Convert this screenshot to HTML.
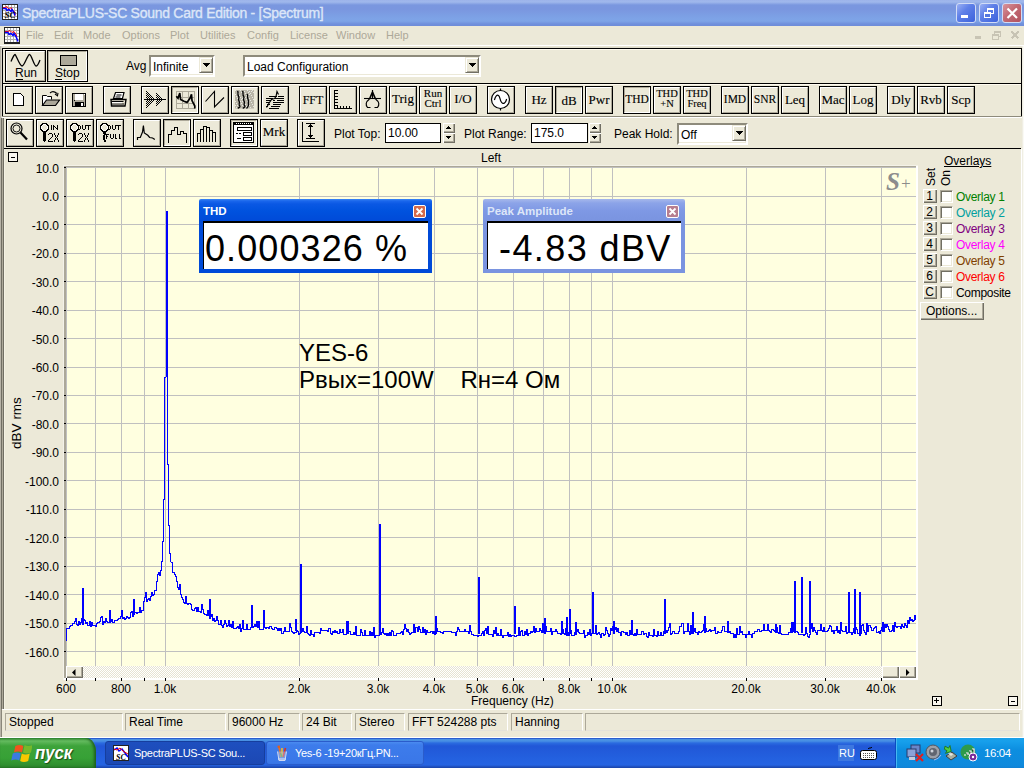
<!DOCTYPE html><html><head><meta charset="utf-8"><style>
body{margin:0;width:1024px;height:768px;position:relative;overflow:hidden;background:#ECE9D8;font-family:"Liberation Sans",sans-serif;font-size:11px;color:#000}
.ser{font-family:"Liberation Serif",serif}
svg{position:absolute;left:0;top:0}
</style></head><body>
<div style="position:absolute;left:0px;top:0px;width:1024px;height:26px;background:linear-gradient(#9DB3EA 0px,#A0B8EC 2px,#7A97DF 5px,#7A96DF 9px,#7DA2E6 18px,#7EA4E7 21px,#7090DC 24px,#6E8CD8 26px)"></div>
<div style="position:absolute;left:22px;top:5px;white-space:nowrap;font-size:14px;color:#DCE6F8;letter-spacing:-0.28px;-webkit-text-stroke:0.35px #DCE6F8">SpectraPLUS-SC Sound Card Edition - [Spectrum]</div>
<svg style="left:2px;top:4px" width="16" height="16" shape-rendering="crispEdges"><rect x="0" y="0" width="16" height="16" fill="#222"/><rect x="1" y="1" width="14" height="14" fill="#fff"/><rect x="3" y="1" width="1" height="14" fill="#B0B0B0"/><rect x="6" y="1" width="1" height="14" fill="#B0B0B0"/><rect x="9" y="1" width="1" height="14" fill="#B0B0B0"/><rect x="12" y="1" width="1" height="14" fill="#B0B0B0"/><rect x="1" y="3" width="14" height="1" fill="#B0B0B0"/><rect x="1" y="6" width="14" height="1" fill="#B0B0B0"/><rect x="1" y="9" width="14" height="1" fill="#B0B0B0"/><rect x="1" y="12" width="14" height="1" fill="#B0B0B0"/><path d="M1 3.5h2l2-1 2 3 2-2 2 3 2 2v3" stroke="#f00" fill="none" shape-rendering="auto"/><path d="M1 4.5h3l1 2 2-1 2 2 1-2 2 3 1 3" stroke="#00f" stroke-width="1.6" fill="none" shape-rendering="auto"/><text x="2.5" y="14" font-family="Liberation Serif" font-style="italic" font-weight="bold" font-size="9" fill="#000" shape-rendering="auto">SC</text></svg>
<div style="position:absolute;left:956px;top:3px;width:18px;height:18px;border:1px solid #D2DCF6;border-radius:3px;background:linear-gradient(135deg,#9AB0F4 0%,#5F80E8 40%,#3C62DC 100%)"></div>
<div style="position:absolute;left:961px;top:15px;width:7px;height:3px;background:#fff"></div>
<div style="position:absolute;left:979px;top:3px;width:18px;height:18px;border:1px solid #D2DCF6;border-radius:3px;background:linear-gradient(135deg,#9AB0F4 0%,#5F80E8 40%,#3C62DC 100%)"></div>
<svg style="left:979px;top:3px" width="20" height="20" shape-rendering="crispEdges"><path d="M8.5 5.5h6v5h-6z" stroke="#fff" fill="none"/><rect x="8" y="5" width="7" height="2" fill="#fff"/><rect x="5.5" y="9.5" width="6" height="5" fill="#5578E0" stroke="#fff"/><rect x="5" y="9" width="7" height="2" fill="#fff"/></svg>
<div style="position:absolute;left:1002px;top:3px;width:18px;height:18px;border:1px solid #D2DCF6;border-radius:3px;background:linear-gradient(135deg,#D9949C 0%,#C26A74 45%,#B2525E 100%)"></div>
<svg style="left:1002px;top:3px" width="20" height="20"><path d="M5.5 5.5L15 15M15 5.5L5.5 15" stroke="#fff" stroke-width="2.2"/></svg>
<div style="position:absolute;left:0px;top:26px;width:1024px;height:19px;background:#ECE9D8"></div>
<div style="position:absolute;left:0px;top:45px;width:1024px;height:1px;background:#fff"></div>
<svg style="left:4px;top:27px" width="16" height="17" shape-rendering="crispEdges"><rect x="0" y="0" width="16" height="17" fill="#222"/><rect x="1" y="1" width="14" height="14" fill="#fff"/><rect x="3" y="1" width="1" height="14" fill="#B0B0B0"/><rect x="6" y="1" width="1" height="14" fill="#B0B0B0"/><rect x="9" y="1" width="1" height="14" fill="#B0B0B0"/><rect x="12" y="1" width="1" height="14" fill="#B0B0B0"/><rect x="1" y="3" width="14" height="1" fill="#B0B0B0"/><rect x="1" y="6" width="14" height="1" fill="#B0B0B0"/><rect x="1" y="9" width="14" height="1" fill="#B0B0B0"/><rect x="1" y="12" width="14" height="1" fill="#B0B0B0"/><path d="M1 4.5h3l2-1 2 2 2-1 2 3 1 2" stroke="#f00" fill="none" shape-rendering="auto"/><path d="M1 5.5h3l1 2 2-1 2 2 1-2 2 3 2 5" stroke="#00f" stroke-width="1.6" fill="none" shape-rendering="auto"/></svg>
<div style="position:absolute;left:26px;top:29px;white-space:nowrap;font-size:11px;color:#ACA899">File</div>
<div style="position:absolute;left:54px;top:29px;white-space:nowrap;font-size:11px;color:#ACA899">Edit</div>
<div style="position:absolute;left:83px;top:29px;white-space:nowrap;font-size:11px;color:#ACA899">Mode</div>
<div style="position:absolute;left:122px;top:29px;white-space:nowrap;font-size:11px;color:#ACA899">Options</div>
<div style="position:absolute;left:170px;top:29px;white-space:nowrap;font-size:11px;color:#ACA899">Plot</div>
<div style="position:absolute;left:200px;top:29px;white-space:nowrap;font-size:11px;color:#ACA899">Utilities</div>
<div style="position:absolute;left:247px;top:29px;white-space:nowrap;font-size:11px;color:#ACA899">Config</div>
<div style="position:absolute;left:290px;top:29px;white-space:nowrap;font-size:11px;color:#ACA899">License</div>
<div style="position:absolute;left:336px;top:29px;white-space:nowrap;font-size:11px;color:#ACA899">Window</div>
<div style="position:absolute;left:386px;top:29px;white-space:nowrap;font-size:11px;color:#ACA899">Help</div>
<svg style="left:970px;top:27px" width="54" height="17" shape-rendering="crispEdges"><g stroke="#C8C4B4" fill="none"><rect x="5" y="9" width="6" height="3" fill="#C8C4B4" stroke="none"/><rect x="22.5" y="7.5" width="6" height="5"/><path d="M22.5 8.5h6"/><path d="M24.5 7.5v-3h6v5h-2M24.5 5.5h6"/></g><path d="M41.5 4.5l7 7M48.5 4.5l-7 7" stroke="#C8C4B4" stroke-width="1.8"/></svg>
<div style="position:absolute;left:0px;top:46px;width:1024px;height:2px;background:linear-gradient(#ECE9D8,#D8D5C4)"></div>
<div style="position:absolute;left:2px;top:48px;width:1020px;height:1px;background:#000"></div>
<div style="position:absolute;left:2px;top:48px;width:1px;height:69px;background:#000"></div>
<div style="position:absolute;left:1021px;top:48px;width:1px;height:69px;background:#000"></div>
<div style="position:absolute;left:3px;top:49px;width:1018px;height:1px;background:#FFFBF0"></div>
<div style="position:absolute;left:2px;top:83px;width:1020px;height:1px;background:#000"></div>
<div style="position:absolute;left:3px;top:84px;width:1018px;height:1px;background:#FFFBF0"></div>
<div style="position:absolute;left:5px;top:50px;width:39px;height:30px;border:1px solid #000;background:#ECE9D8"><div style="position:absolute;left:0;top:0;width:37px;height:28px;border-top:1px solid #fff;border-left:1px solid #fff;border-bottom:1px solid #ACA899;border-right:1px solid #ACA899;"></div><svg width="39" height="30"><path d="M5 10.5 C6.5 7 8 3.5 9 3.5 S13.5 15 16 15 S21.5 3.5 23.5 3.5 S28 15 30 15 S33 11 34 9" stroke="#000" stroke-width="1.3" fill="none"/></svg><div style="position:absolute;left:9px;top:15px;font-size:12px">Run</div><div style="position:absolute;left:10px;top:28px;width:7px;height:1px;background:#000"></div></div>
<div style="position:absolute;left:47px;top:50px;width:39px;height:30px;border:1px solid #000;background:#ECE9D8"><div style="position:absolute;left:0;top:0;width:37px;height:28px;border-top:1px solid #ACA899;border-left:1px solid #ACA899;border-bottom:1px solid #fff;border-right:1px solid #fff;"></div><div style="position:absolute;left:12px;top:4px;width:15px;height:9px;border:1px solid #000;background:#ACA899"></div><div style="position:absolute;left:7px;top:15px;font-size:12px">Stop</div><div style="position:absolute;left:7px;top:28px;width:7px;height:1px;background:#000"></div></div>
<div style="position:absolute;left:126px;top:59px;white-space:nowrap;font-size:12px;color:#000">Avg</div>
<div style="position:absolute;left:149px;top:55px;width:62px;height:18px;background:#fff;border-top:2px solid #8E8B7C;border-left:2px solid #8E8B7C;border-bottom:2px solid #fff;border-right:2px solid #fff;box-shadow:inset -1px -1px 0 #ECE9D8"><div style="position:absolute;left:2px;top:3px;font-size:12px">Infinite</div><div style="position:absolute;right:0px;top:0px;width:12px;height:14px;background:#ECE9D8;border-top:1px solid #ECE9D8;border-left:1px solid #ECE9D8;border-bottom:1px solid #716F64;border-right:1px solid #716F64;box-shadow:inset 1px 1px 0 #fff,inset -1px -1px 0 #ACA899"><svg style="left:3px;top:5px" width="7" height="4" shape-rendering="crispEdges"><path d="M0 0h7v1h-1v1h-1v1h-1v1h-1v-1h-1v-1h-1v-1h-1z" fill="#000"/></svg></div></div>
<div style="position:absolute;left:243px;top:55px;width:234px;height:18px;background:#fff;border-top:2px solid #8E8B7C;border-left:2px solid #8E8B7C;border-bottom:2px solid #fff;border-right:2px solid #fff;box-shadow:inset -1px -1px 0 #ECE9D8"><div style="position:absolute;left:2px;top:3px;font-size:12px">Load Configuration</div><div style="position:absolute;right:0px;top:0px;width:12px;height:14px;background:#ECE9D8;border-top:1px solid #ECE9D8;border-left:1px solid #ECE9D8;border-bottom:1px solid #716F64;border-right:1px solid #716F64;box-shadow:inset 1px 1px 0 #fff,inset -1px -1px 0 #ACA899"><svg style="left:3px;top:5px" width="7" height="4" shape-rendering="crispEdges"><path d="M0 0h7v1h-1v1h-1v1h-1v1h-1v-1h-1v-1h-1v-1h-1z" fill="#000"/></svg></div></div>
<div style="position:absolute;left:2px;top:85px;width:1px;height:31px;background:#000"></div>
<div style="position:absolute;left:1021px;top:85px;width:1px;height:31px;background:#000"></div>
<div style="position:absolute;left:2px;top:116px;width:1020px;height:1px;background:#8E8B7C"></div>
<div style="position:absolute;left:2px;top:117px;width:1020px;height:1px;background:#fff"></div>
<div style="position:absolute;left:5px;top:86px;width:26px;height:26px;border:1px solid #000;background:#ECE9D8"><div style="position:absolute;left:0;top:0;width:24px;height:24px;border-top:1px solid #fff;border-left:1px solid #fff;border-bottom:1px solid #ACA899;border-right:1px solid #ACA899;"></div><svg width="26" height="26" shape-rendering="crispEdges"><path d="M7.5 6.5h7l3 3v9h-10z" fill="#fff" stroke="#000"/><rect x="15" y="7" width="1" height="1" fill="#000"/><rect x="16" y="8" width="1" height="1" fill="#000"/></svg></div>
<div style="position:absolute;left:35px;top:86px;width:26px;height:26px;border:1px solid #000;background:#ECE9D8"><div style="position:absolute;left:0;top:0;width:24px;height:24px;border-top:1px solid #fff;border-left:1px solid #fff;border-bottom:1px solid #ACA899;border-right:1px solid #ACA899;"></div><svg width="26" height="26"><path d="M6.5 18.5v-10h4l1 1h4v3" fill="#fff" stroke="#000" stroke-linejoin="round"/><path d="M6.5 18.5l4-5.5h13l-4 5.5z" fill="#ACA899" stroke="#000" stroke-width="1.2"/><path d="M14 6q3-3 7 0.5" fill="none" stroke="#000" stroke-width="1.1"/><path d="M19 7l2.5 1.8 0.5-3" fill="none" stroke="#000" stroke-width="1.1"/></svg></div>
<div style="position:absolute;left:65px;top:86px;width:26px;height:26px;border:1px solid #000;background:#ECE9D8"><div style="position:absolute;left:0;top:0;width:24px;height:24px;border-top:1px solid #fff;border-left:1px solid #fff;border-bottom:1px solid #ACA899;border-right:1px solid #ACA899;"></div><svg width="26" height="26" shape-rendering="crispEdges"><rect x="6" y="6" width="14" height="13" fill="#ACA899"/><path d="M6.5 6.5h13v12.5h-13z" fill="none" stroke="#000"/><rect x="9" y="7" width="8" height="6" fill="#fff"/><rect x="8" y="13" width="1" height="1" fill="#000"/><rect x="9" y="15" width="9" height="4" fill="#000"/><rect x="15" y="16" width="2" height="3" fill="#fff"/><rect x="18" y="7" width="1" height="1" fill="#fff"/></svg></div>
<div style="position:absolute;left:103px;top:86px;width:26px;height:26px;border:1px solid #000;background:#ECE9D8"><div style="position:absolute;left:0;top:0;width:24px;height:24px;border-top:1px solid #fff;border-left:1px solid #fff;border-bottom:1px solid #ACA899;border-right:1px solid #ACA899;"></div><svg width="26" height="26"><path d="M11.5 5.5h8.5l-1.5 6h-9z" fill="#fff" stroke="#000" stroke-width="1.2"/><path d="M12.5 8h5M11.5 10h5" stroke="#000"/><path d="M7 12.5h15l-1 6.5h-13.5z" fill="#ECE9D8" stroke="#000" stroke-width="1.4"/><path d="M7.5 14.5h12M8 17h12" stroke="#000" stroke-width="1.2"/><path d="M8 15.7h10" stroke="#fff"/></svg></div>
<div style="position:absolute;left:141px;top:86px;width:26px;height:26px;border:1px solid #000;background:#ECE9D8"><div style="position:absolute;left:0;top:0;width:24px;height:24px;border-top:1px solid #fff;border-left:1px solid #fff;border-bottom:1px solid #ACA899;border-right:1px solid #ACA899;"></div><svg width="26" height="26" shape-rendering="crispEdges"><g fill="#000"><rect x="4" y="4" width="1" height="1"/><rect x="4" y="6" width="1" height="1"/><rect x="4" y="8" width="1" height="1"/><rect x="4" y="10" width="1" height="1"/><rect x="4" y="12" width="1" height="1"/><rect x="4" y="14" width="1" height="1"/><rect x="4" y="16" width="1" height="1"/><rect x="4" y="18" width="1" height="1"/><rect x="4" y="20" width="1" height="1"/><rect x="5" y="5" width="1" height="1"/><rect x="5" y="7" width="1" height="1"/><rect x="5" y="9" width="1" height="1"/><rect x="5" y="11" width="1" height="1"/><rect x="5" y="13" width="1" height="1"/><rect x="5" y="15" width="1" height="1"/><rect x="5" y="17" width="1" height="1"/><rect x="5" y="19" width="1" height="1"/><rect x="6" y="6" width="1" height="1"/><rect x="6" y="8" width="1" height="1"/><rect x="6" y="10" width="1" height="1"/><rect x="6" y="12" width="1" height="1"/><rect x="6" y="14" width="1" height="1"/><rect x="6" y="16" width="1" height="1"/><rect x="6" y="18" width="1" height="1"/><rect x="7" y="7" width="1" height="1"/><rect x="7" y="9" width="1" height="1"/><rect x="7" y="11" width="1" height="1"/><rect x="7" y="13" width="1" height="1"/><rect x="7" y="15" width="1" height="1"/><rect x="7" y="17" width="1" height="1"/><rect x="8" y="8" width="1" height="1"/><rect x="8" y="10" width="1" height="1"/><rect x="8" y="12" width="1" height="1"/><rect x="8" y="14" width="1" height="1"/><rect x="8" y="16" width="1" height="1"/><rect x="9" y="9" width="1" height="1"/><rect x="9" y="11" width="1" height="1"/><rect x="9" y="13" width="1" height="1"/><rect x="9" y="15" width="1" height="1"/><rect x="10" y="10" width="1" height="1"/><rect x="10" y="12" width="1" height="1"/><rect x="10" y="14" width="1" height="1"/><rect x="11" y="11" width="1" height="1"/><rect x="11" y="13" width="1" height="1"/><rect x="12" y="12" width="1" height="1"/><rect x="14" y="6" width="1" height="1"/><rect x="14" y="8" width="1" height="1"/><rect x="14" y="10" width="1" height="1"/><rect x="14" y="12" width="1" height="1"/><rect x="14" y="14" width="1" height="1"/><rect x="14" y="16" width="1" height="1"/><rect x="14" y="18" width="1" height="1"/><rect x="15" y="7" width="1" height="1"/><rect x="15" y="9" width="1" height="1"/><rect x="15" y="11" width="1" height="1"/><rect x="15" y="13" width="1" height="1"/><rect x="15" y="15" width="1" height="1"/><rect x="15" y="17" width="1" height="1"/><rect x="16" y="8" width="1" height="1"/><rect x="16" y="10" width="1" height="1"/><rect x="16" y="12" width="1" height="1"/><rect x="16" y="14" width="1" height="1"/><rect x="16" y="16" width="1" height="1"/><rect x="17" y="9" width="1" height="1"/><rect x="17" y="11" width="1" height="1"/><rect x="17" y="13" width="1" height="1"/><rect x="17" y="15" width="1" height="1"/><rect x="18" y="10" width="1" height="1"/><rect x="18" y="12" width="1" height="1"/><rect x="18" y="14" width="1" height="1"/><rect x="19" y="11" width="1" height="1"/><rect x="19" y="13" width="1" height="1"/><rect x="20" y="12" width="1" height="1"/></g><rect x="2" y="12" width="22" height="1" fill="#000"/></svg></div>
<div style="position:absolute;left:171px;top:86px;width:26px;height:26px;border:1px solid #000;background:#ECE9D8"><div style="position:absolute;left:0;top:0;width:24px;height:24px;border-top:1px solid #ACA899;border-left:1px solid #ACA899;border-bottom:1px solid #fff;border-right:1px solid #fff;"></div><svg width="26" height="26" shape-rendering="crispEdges"><g stroke="#ACA899" fill="none"><path d="M4.5 4.5h18v17h-18z"/><path d="M10.5 4v18M16.5 4v18M4 10.5h19M4 16.5h19"/></g><path d="M4.3 9.3L6 11.3 7.8 6 8.6 12.5 12 14.2 15 15.4 18 11.3 19.5 7.2 20 13.6 22.8 19 22.8 21.5" stroke="#000" stroke-width="1.7" fill="none" shape-rendering="auto"/></svg></div>
<div style="position:absolute;left:201px;top:86px;width:26px;height:26px;border:1px solid #000;background:#ECE9D8"><div style="position:absolute;left:0;top:0;width:24px;height:24px;border-top:1px solid #fff;border-left:1px solid #fff;border-bottom:1px solid #ACA899;border-right:1px solid #ACA899;"></div><svg width="26" height="26"><path d="M3.5 14.5L12.5 4.5V20L22 10.5" stroke="#000" fill="none" stroke-width="1.1"/></svg></div>
<div style="position:absolute;left:231px;top:86px;width:26px;height:26px;border:1px solid #000;background:#ECE9D8"><div style="position:absolute;left:0;top:0;width:24px;height:24px;border-top:1px solid #fff;border-left:1px solid #fff;border-bottom:1px solid #ACA899;border-right:1px solid #ACA899;"></div><svg width="26" height="26"><rect x="3" y="3" width="19" height="18.5" fill="#BAB6A8"/><g fill="#fff" opacity="0.7" shape-rendering="crispEdges"><rect x="3" y="3" width="1" height="1"/><rect x="10" y="14" width="1" height="1"/><rect x="17" y="7" width="1" height="1"/><rect x="5" y="18" width="1" height="1"/><rect x="12" y="11" width="1" height="1"/><rect x="19" y="4" width="1" height="1"/><rect x="7" y="15" width="1" height="1"/><rect x="14" y="8" width="1" height="1"/><rect x="21" y="19" width="1" height="1"/><rect x="9" y="12" width="1" height="1"/><rect x="16" y="5" width="1" height="1"/><rect x="4" y="16" width="1" height="1"/><rect x="11" y="9" width="1" height="1"/><rect x="18" y="20" width="1" height="1"/><rect x="6" y="13" width="1" height="1"/><rect x="13" y="6" width="1" height="1"/><rect x="20" y="17" width="1" height="1"/><rect x="8" y="10" width="1" height="1"/><rect x="15" y="3" width="1" height="1"/><rect x="3" y="14" width="1" height="1"/><rect x="10" y="7" width="1" height="1"/><rect x="17" y="18" width="1" height="1"/><rect x="5" y="11" width="1" height="1"/><rect x="12" y="4" width="1" height="1"/><rect x="19" y="15" width="1" height="1"/><rect x="7" y="8" width="1" height="1"/><rect x="14" y="19" width="1" height="1"/><rect x="21" y="12" width="1" height="1"/><rect x="9" y="5" width="1" height="1"/><rect x="16" y="16" width="1" height="1"/><rect x="4" y="9" width="1" height="1"/><rect x="11" y="20" width="1" height="1"/><rect x="18" y="13" width="1" height="1"/><rect x="6" y="6" width="1" height="1"/><rect x="13" y="17" width="1" height="1"/><rect x="20" y="10" width="1" height="1"/><rect x="8" y="3" width="1" height="1"/><rect x="15" y="14" width="1" height="1"/><rect x="3" y="7" width="1" height="1"/><rect x="10" y="18" width="1" height="1"/><rect x="17" y="11" width="1" height="1"/><rect x="5" y="4" width="1" height="1"/><rect x="12" y="15" width="1" height="1"/><rect x="19" y="8" width="1" height="1"/><rect x="7" y="19" width="1" height="1"/><rect x="14" y="12" width="1" height="1"/><rect x="21" y="5" width="1" height="1"/><rect x="9" y="16" width="1" height="1"/><rect x="16" y="9" width="1" height="1"/><rect x="4" y="20" width="1" height="1"/><rect x="11" y="13" width="1" height="1"/><rect x="18" y="6" width="1" height="1"/><rect x="6" y="17" width="1" height="1"/><rect x="13" y="10" width="1" height="1"/><rect x="20" y="3" width="1" height="1"/><rect x="8" y="14" width="1" height="1"/><rect x="15" y="7" width="1" height="1"/><rect x="3" y="18" width="1" height="1"/><rect x="10" y="11" width="1" height="1"/><rect x="17" y="4" width="1" height="1"/></g><path d="M5.5 4c1.5 2-.5 3 1 5s-1 3 .5 5-1 3 .5 4.5-1 2-1.5 3M10.5 4c1.5 2-.5 3 1 5s-1 3 .5 5-1 3 .5 4.5-1 2-1.5 3M15 7c1.5 2 0 3 1 5s0 4 .5 5.5-1 2.5-2 4" stroke="#000" stroke-width="1.3" fill="none"/></svg></div>
<div style="position:absolute;left:261px;top:86px;width:26px;height:26px;border:1px solid #000;background:#ECE9D8"><div style="position:absolute;left:0;top:0;width:24px;height:24px;border-top:1px solid #fff;border-left:1px solid #fff;border-bottom:1px solid #ACA899;border-right:1px solid #ACA899;"></div><svg width="26" height="26" shape-rendering="crispEdges"><g fill="#000"><rect x="7" y="9" width="8" height="1"/><rect x="16" y="9" width="6" height="1"/><rect x="4" y="11" width="7" height="1"/><rect x="13" y="11" width="9" height="1"/><rect x="4" y="13" width="5" height="1"/><rect x="11" y="13" width="2" height="1"/><rect x="15" y="13" width="7" height="1"/><rect x="4" y="15" width="4" height="1"/><rect x="11" y="15" width="11" height="1"/><rect x="5" y="17" width="3" height="1"/><rect x="11" y="17" width="8" height="1"/><rect x="4" y="19" width="2" height="1"/><rect x="9" y="19" width="9" height="1"/><rect x="7" y="21" width="10" height="1"/></g><path d="M4.5 20.5l3-5 2-3 3-1 1.5-2 1-5 1.5 3" stroke="#000" stroke-width="1.2" fill="none" shape-rendering="auto"/></svg></div>
<div style="position:absolute;left:299px;top:86px;width:26px;height:26px;border:1px solid #000;background:#ECE9D8"><div style="position:absolute;left:0;top:0;width:24px;height:24px;border-top:1px solid #fff;border-left:1px solid #fff;border-bottom:1px solid #ACA899;border-right:1px solid #ACA899;"></div><div style="position:absolute;left:0;top:6px;width:26px;text-align:center;font-family:'Liberation Serif',serif;font-size:12px;-webkit-text-stroke:0.12px #000">FFT</div></div>
<div style="position:absolute;left:329px;top:86px;width:26px;height:26px;border:1px solid #000;background:#ECE9D8"><div style="position:absolute;left:0;top:0;width:24px;height:24px;border-top:1px solid #fff;border-left:1px solid #fff;border-bottom:1px solid #ACA899;border-right:1px solid #ACA899;"></div><svg width="26" height="26" shape-rendering="crispEdges"><g fill="#000"><rect x="4" y="3" width="1" height="19"/><rect x="4" y="21" width="18" height="1"/><rect x="5" y="3" width="3" height="1"/><rect x="5" y="6" width="3" height="1"/><rect x="5" y="9" width="3" height="1"/><rect x="5" y="12" width="3" height="1"/><rect x="5" y="15" width="3" height="1"/><rect x="5" y="18" width="3" height="1"/><rect x="7" y="19" width="1" height="2"/><rect x="10" y="19" width="1" height="2"/><rect x="13" y="19" width="1" height="2"/><rect x="16" y="19" width="1" height="2"/><rect x="19" y="19" width="1" height="2"/></g></svg></div>
<div style="position:absolute;left:359px;top:86px;width:26px;height:26px;border:1px solid #000;background:#ECE9D8"><div style="position:absolute;left:0;top:0;width:24px;height:24px;border-top:1px solid #fff;border-left:1px solid #fff;border-bottom:1px solid #ACA899;border-right:1px solid #ACA899;"></div><svg width="26" height="26"><path d="M12.5 3v8" stroke="#000" stroke-width="1.2"/><path d="M12.5 5l-3 7M12.5 5l3 7" stroke="#000" stroke-width="1.6"/><path d="M4 11.5h17" stroke="#000" stroke-width="1.1"/><path d="M9.5 12c-4 3-4 6-2 8.5h3M15.5 12c4 3 4 6 2 8.5h-3" stroke="#000" stroke-width="1.2" fill="none"/></svg></div>
<div style="position:absolute;left:389px;top:86px;width:26px;height:26px;border:1px solid #000;background:#ECE9D8"><div style="position:absolute;left:0;top:0;width:24px;height:24px;border-top:1px solid #fff;border-left:1px solid #fff;border-bottom:1px solid #ACA899;border-right:1px solid #ACA899;"></div><div style="position:absolute;left:0;top:4px;width:26px;text-align:center;font-family:'Liberation Serif',serif;font-size:13px;-webkit-text-stroke:0.12px #000">Trig</div></div>
<div style="position:absolute;left:419px;top:86px;width:26px;height:26px;border:1px solid #000;background:#ECE9D8"><div style="position:absolute;left:0;top:0;width:24px;height:24px;border-top:1px solid #fff;border-left:1px solid #fff;border-bottom:1px solid #ACA899;border-right:1px solid #ACA899;"></div><div style="position:absolute;left:0;top:1px;width:26px;text-align:center;font-family:'Liberation Serif',serif;font-size:11px;line-height:10px;-webkit-text-stroke:0.12px #000">Run<br>Ctrl</div></div>
<div style="position:absolute;left:449px;top:86px;width:26px;height:26px;border:1px solid #000;background:#ECE9D8"><div style="position:absolute;left:0;top:0;width:24px;height:24px;border-top:1px solid #fff;border-left:1px solid #fff;border-bottom:1px solid #ACA899;border-right:1px solid #ACA899;"></div><div style="position:absolute;left:0;top:4px;width:26px;text-align:center;font-family:'Liberation Serif',serif;font-size:13px;-webkit-text-stroke:0.12px #000">I/O</div></div>
<div style="position:absolute;left:487px;top:86px;width:26px;height:26px;border:1px solid #000;background:#ECE9D8"><div style="position:absolute;left:0;top:0;width:24px;height:24px;border-top:1px solid #fff;border-left:1px solid #fff;border-bottom:1px solid #ACA899;border-right:1px solid #ACA899;"></div><svg width="26" height="26"><circle cx="12.5" cy="12.5" r="9" fill="#fff" stroke="#000" stroke-width="1.2"/><path d="M12.5 1.5v2.5M12.5 21v2.5" stroke="#000" stroke-width="1.2"/><path d="M6.4 13C7.5 9 9 7.5 10.5 8.5S12 13 13 14.5 15 17 16.5 16 18 14 18.6 12" stroke="#000" stroke-width="1.2" fill="none"/></svg></div>
<div style="position:absolute;left:525px;top:86px;width:26px;height:26px;border:1px solid #000;background:#ECE9D8"><div style="position:absolute;left:0;top:0;width:24px;height:24px;border-top:1px solid #fff;border-left:1px solid #fff;border-bottom:1px solid #ACA899;border-right:1px solid #ACA899;"></div><div style="position:absolute;left:0;top:5px;width:26px;text-align:center;font-family:'Liberation Serif',serif;font-size:13px;-webkit-text-stroke:0.12px #000">Hz</div></div>
<div style="position:absolute;left:555px;top:86px;width:26px;height:26px;border:1px solid #000;background:#ECE9D8"><div style="position:absolute;left:0;top:0;width:24px;height:24px;border-top:1px solid #ACA899;border-left:1px solid #ACA899;border-bottom:1px solid #fff;border-right:1px solid #fff;"></div><div style="position:absolute;left:0;top:6px;width:26px;text-align:center;font-family:'Liberation Serif',serif;font-size:13px;-webkit-text-stroke:0.12px #000">dB</div></div>
<div style="position:absolute;left:585px;top:86px;width:26px;height:26px;border:1px solid #000;background:#ECE9D8"><div style="position:absolute;left:0;top:0;width:24px;height:24px;border-top:1px solid #fff;border-left:1px solid #fff;border-bottom:1px solid #ACA899;border-right:1px solid #ACA899;"></div><div style="position:absolute;left:0;top:5px;width:26px;text-align:center;font-family:'Liberation Serif',serif;font-size:13px;-webkit-text-stroke:0.12px #000">Pwr</div></div>
<div style="position:absolute;left:623px;top:86px;width:26px;height:26px;border:1px solid #000;background:#ECE9D8"><div style="position:absolute;left:0;top:0;width:24px;height:24px;border-top:1px solid #ACA899;border-left:1px solid #ACA899;border-bottom:1px solid #fff;border-right:1px solid #fff;"></div><div style="position:absolute;left:0;top:6px;width:26px;text-align:center;font-family:'Liberation Serif',serif;font-size:11.5px;-webkit-text-stroke:0.12px #000">THD</div></div>
<div style="position:absolute;left:653px;top:86px;width:26px;height:26px;border:1px solid #000;background:#ECE9D8"><div style="position:absolute;left:0;top:0;width:24px;height:24px;border-top:1px solid #fff;border-left:1px solid #fff;border-bottom:1px solid #ACA899;border-right:1px solid #ACA899;"></div><div style="position:absolute;left:0;top:2px;width:26px;text-align:center;font-family:'Liberation Serif',serif;font-size:10.5px;line-height:10px;-webkit-text-stroke:0.12px #000">THD<br>+N</div></div>
<div style="position:absolute;left:683px;top:86px;width:26px;height:26px;border:1px solid #000;background:#ECE9D8"><div style="position:absolute;left:0;top:0;width:24px;height:24px;border-top:1px solid #fff;border-left:1px solid #fff;border-bottom:1px solid #ACA899;border-right:1px solid #ACA899;"></div><div style="position:absolute;left:0;top:2px;width:26px;text-align:center;font-family:'Liberation Serif',serif;font-size:10.5px;line-height:10px;-webkit-text-stroke:0.12px #000">THD<br>Freq</div></div>
<div style="position:absolute;left:721px;top:86px;width:26px;height:26px;border:1px solid #000;background:#ECE9D8"><div style="position:absolute;left:0;top:0;width:24px;height:24px;border-top:1px solid #fff;border-left:1px solid #fff;border-bottom:1px solid #ACA899;border-right:1px solid #ACA899;"></div><div style="position:absolute;left:0;top:6px;width:26px;text-align:center;font-family:'Liberation Serif',serif;font-size:11.5px;-webkit-text-stroke:0.12px #000">IMD</div></div>
<div style="position:absolute;left:751px;top:86px;width:26px;height:26px;border:1px solid #000;background:#ECE9D8"><div style="position:absolute;left:0;top:0;width:24px;height:24px;border-top:1px solid #fff;border-left:1px solid #fff;border-bottom:1px solid #ACA899;border-right:1px solid #ACA899;"></div><div style="position:absolute;left:0;top:6px;width:26px;text-align:center;font-family:'Liberation Serif',serif;font-size:11.5px;-webkit-text-stroke:0.12px #000">SNR</div></div>
<div style="position:absolute;left:781px;top:86px;width:26px;height:26px;border:1px solid #000;background:#ECE9D8"><div style="position:absolute;left:0;top:0;width:24px;height:24px;border-top:1px solid #fff;border-left:1px solid #fff;border-bottom:1px solid #ACA899;border-right:1px solid #ACA899;"></div><div style="position:absolute;left:0;top:5px;width:26px;text-align:center;font-family:'Liberation Serif',serif;font-size:13px;-webkit-text-stroke:0.12px #000">Leq</div></div>
<div style="position:absolute;left:819px;top:86px;width:26px;height:26px;border:1px solid #000;background:#ECE9D8"><div style="position:absolute;left:0;top:0;width:24px;height:24px;border-top:1px solid #fff;border-left:1px solid #fff;border-bottom:1px solid #ACA899;border-right:1px solid #ACA899;"></div><div style="position:absolute;left:0;top:5px;width:26px;text-align:center;font-family:'Liberation Serif',serif;font-size:13px;-webkit-text-stroke:0.12px #000">Mac</div></div>
<div style="position:absolute;left:849px;top:86px;width:26px;height:26px;border:1px solid #000;background:#ECE9D8"><div style="position:absolute;left:0;top:0;width:24px;height:24px;border-top:1px solid #fff;border-left:1px solid #fff;border-bottom:1px solid #ACA899;border-right:1px solid #ACA899;"></div><div style="position:absolute;left:0;top:5px;width:26px;text-align:center;font-family:'Liberation Serif',serif;font-size:13px;-webkit-text-stroke:0.12px #000">Log</div></div>
<div style="position:absolute;left:887px;top:86px;width:26px;height:26px;border:1px solid #000;background:#ECE9D8"><div style="position:absolute;left:0;top:0;width:24px;height:24px;border-top:1px solid #fff;border-left:1px solid #fff;border-bottom:1px solid #ACA899;border-right:1px solid #ACA899;"></div><div style="position:absolute;left:0;top:5px;width:26px;text-align:center;font-family:'Liberation Serif',serif;font-size:13px;-webkit-text-stroke:0.12px #000">Dly</div></div>
<div style="position:absolute;left:917px;top:86px;width:26px;height:26px;border:1px solid #000;background:#ECE9D8"><div style="position:absolute;left:0;top:0;width:24px;height:24px;border-top:1px solid #fff;border-left:1px solid #fff;border-bottom:1px solid #ACA899;border-right:1px solid #ACA899;"></div><div style="position:absolute;left:0;top:5px;width:26px;text-align:center;font-family:'Liberation Serif',serif;font-size:13px;-webkit-text-stroke:0.12px #000">Rvb</div></div>
<div style="position:absolute;left:947px;top:86px;width:26px;height:26px;border:1px solid #000;background:#ECE9D8"><div style="position:absolute;left:0;top:0;width:24px;height:24px;border-top:1px solid #fff;border-left:1px solid #fff;border-bottom:1px solid #ACA899;border-right:1px solid #ACA899;"></div><div style="position:absolute;left:0;top:5px;width:26px;text-align:center;font-family:'Liberation Serif',serif;font-size:13px;-webkit-text-stroke:0.12px #000">Scp</div></div>
<div style="position:absolute;left:3px;top:148px;width:1018px;height:1px;background:#000"></div>
<div style="position:absolute;left:6px;top:119px;width:26px;height:26px;border:1px solid #000;background:#ECE9D8"><div style="position:absolute;left:0;top:0;width:24px;height:24px;border-top:1px solid #fff;border-left:1px solid #fff;border-bottom:1px solid #ACA899;border-right:1px solid #ACA899;"></div><svg width="26" height="26"><circle cx="9.5" cy="8.5" r="5.5" fill="none" stroke="#000" stroke-width="1.2"/><circle cx="9.5" cy="8.5" r="3.5" fill="none" stroke="#000" stroke-width="0.9"/><path d="M13.5 12.5l6.5 7" stroke="#000" stroke-width="2.2"/></svg></div>
<div style="position:absolute;left:36px;top:119px;width:26px;height:26px;border:1px solid #000;background:#ECE9D8"><div style="position:absolute;left:0;top:0;width:24px;height:24px;border-top:1px solid #fff;border-left:1px solid #fff;border-bottom:1px solid #ACA899;border-right:1px solid #ACA899;"></div><svg width="26" height="26" shape-rendering="crispEdges"><g fill="#fff"><rect x="6" y="4" width="3" height="1"/><rect x="5" y="5" width="1" height="1"/><rect x="9" y="5" width="1" height="1"/><rect x="4" y="6" width="1" height="1"/><rect x="10" y="6" width="1" height="1"/><rect x="4" y="7" width="1" height="1"/><rect x="10" y="7" width="1" height="1"/><rect x="4" y="8" width="1" height="1"/><rect x="10" y="8" width="1" height="1"/><rect x="5" y="9" width="1" height="1"/><rect x="9" y="9" width="1" height="1"/><rect x="6" y="10" width="3" height="1"/></g><g fill="#000"><rect x="5" y="3" width="5" height="1"/><rect x="4" y="4" width="2" height="1"/><rect x="9" y="4" width="2" height="1"/><rect x="3" y="5" width="2" height="1"/><rect x="10" y="5" width="2" height="1"/><rect x="3" y="6" width="1" height="1"/><rect x="11" y="6" width="1" height="1"/><rect x="3" y="7" width="1" height="1"/><rect x="11" y="7" width="1" height="1"/><rect x="3" y="8" width="1" height="1"/><rect x="11" y="8" width="1" height="1"/><rect x="3" y="9" width="2" height="1"/><rect x="10" y="9" width="2" height="1"/><rect x="4" y="10" width="2" height="1"/><rect x="9" y="10" width="2" height="1"/><rect x="5" y="11" width="5" height="1"/></g><g fill="#000"><rect x="6" y="12" width="3" height="1"/><rect x="6" y="13" width="3" height="1"/><rect x="6" y="14" width="3" height="1"/><rect x="6" y="15" width="3" height="1"/><rect x="6" y="16" width="3" height="1"/><rect x="6" y="17" width="3" height="1"/><rect x="6" y="18" width="3" height="1"/><rect x="6" y="19" width="3" height="1"/><rect x="6" y="20" width="3" height="1"/><rect x="7" y="21" width="1" height="1"/></g><g fill="#000"><rect x="14" y="5" width="1" height="1"/><rect x="14" y="6" width="1" height="1"/><rect x="14" y="7" width="1" height="1"/><rect x="14" y="8" width="1" height="1"/><rect x="14" y="9" width="1" height="1"/><rect x="16" y="5" width="1" height="1"/><rect x="20" y="5" width="1" height="1"/><rect x="16" y="6" width="2" height="1"/><rect x="20" y="6" width="1" height="1"/><rect x="16" y="7" width="1" height="1"/><rect x="18" y="7" width="1" height="1"/><rect x="20" y="7" width="1" height="1"/><rect x="16" y="8" width="1" height="1"/><rect x="19" y="8" width="2" height="1"/><rect x="16" y="9" width="1" height="1"/><rect x="20" y="9" width="1" height="1"/></g><g fill="#000"><rect x="12" y="13" width="3" height="1"/><rect x="11" y="14" width="1" height="1"/><rect x="15" y="14" width="1" height="1"/><rect x="15" y="15" width="1" height="1"/><rect x="15" y="16" width="1" height="1"/><rect x="14" y="17" width="1" height="1"/><rect x="13" y="18" width="1" height="1"/><rect x="12" y="19" width="1" height="1"/><rect x="11" y="20" width="1" height="1"/><rect x="11" y="21" width="5" height="1"/><rect x="17" y="13" width="1" height="1"/><rect x="21" y="13" width="1" height="1"/><rect x="17" y="14" width="1" height="1"/><rect x="21" y="14" width="1" height="1"/><rect x="18" y="15" width="1" height="1"/><rect x="20" y="15" width="1" height="1"/><rect x="18" y="16" width="1" height="1"/><rect x="20" y="16" width="1" height="1"/><rect x="19" y="17" width="1" height="1"/><rect x="18" y="18" width="1" height="1"/><rect x="20" y="18" width="1" height="1"/><rect x="18" y="19" width="1" height="1"/><rect x="20" y="19" width="1" height="1"/><rect x="17" y="20" width="1" height="1"/><rect x="21" y="20" width="1" height="1"/><rect x="17" y="21" width="1" height="1"/><rect x="21" y="21" width="1" height="1"/></g></svg></div>
<div style="position:absolute;left:66px;top:119px;width:26px;height:26px;border:1px solid #000;background:#ECE9D8"><div style="position:absolute;left:0;top:0;width:24px;height:24px;border-top:1px solid #fff;border-left:1px solid #fff;border-bottom:1px solid #ACA899;border-right:1px solid #ACA899;"></div><svg width="26" height="26" shape-rendering="crispEdges"><g fill="#fff"><rect x="6" y="4" width="3" height="1"/><rect x="5" y="5" width="1" height="1"/><rect x="9" y="5" width="1" height="1"/><rect x="4" y="6" width="1" height="1"/><rect x="10" y="6" width="1" height="1"/><rect x="4" y="7" width="1" height="1"/><rect x="10" y="7" width="1" height="1"/><rect x="4" y="8" width="1" height="1"/><rect x="10" y="8" width="1" height="1"/><rect x="5" y="9" width="1" height="1"/><rect x="9" y="9" width="1" height="1"/><rect x="6" y="10" width="3" height="1"/></g><g fill="#000"><rect x="5" y="3" width="5" height="1"/><rect x="4" y="4" width="2" height="1"/><rect x="9" y="4" width="2" height="1"/><rect x="3" y="5" width="2" height="1"/><rect x="10" y="5" width="2" height="1"/><rect x="3" y="6" width="1" height="1"/><rect x="11" y="6" width="1" height="1"/><rect x="3" y="7" width="1" height="1"/><rect x="11" y="7" width="1" height="1"/><rect x="3" y="8" width="1" height="1"/><rect x="11" y="8" width="1" height="1"/><rect x="3" y="9" width="2" height="1"/><rect x="10" y="9" width="2" height="1"/><rect x="4" y="10" width="2" height="1"/><rect x="9" y="10" width="2" height="1"/><rect x="5" y="11" width="5" height="1"/></g><g fill="#000"><rect x="6" y="12" width="3" height="1"/><rect x="6" y="13" width="3" height="1"/><rect x="6" y="14" width="3" height="1"/><rect x="6" y="15" width="3" height="1"/><rect x="6" y="16" width="3" height="1"/><rect x="6" y="17" width="3" height="1"/><rect x="6" y="18" width="3" height="1"/><rect x="6" y="19" width="3" height="1"/><rect x="6" y="20" width="3" height="1"/><rect x="7" y="21" width="1" height="1"/></g><g fill="#000"><rect x="11" y="5" width="2" height="1"/><rect x="13" y="6" width="1" height="1"/><rect x="13" y="7" width="1" height="1"/><rect x="13" y="8" width="1" height="1"/><rect x="11" y="9" width="2" height="1"/></g><g fill="#000"><rect x="15" y="5" width="1" height="1"/><rect x="18" y="5" width="1" height="1"/><rect x="15" y="6" width="1" height="1"/><rect x="18" y="6" width="1" height="1"/><rect x="15" y="7" width="1" height="1"/><rect x="18" y="7" width="1" height="1"/><rect x="15" y="8" width="1" height="1"/><rect x="18" y="8" width="1" height="1"/><rect x="16" y="9" width="2" height="1"/></g><g fill="#000"><rect x="19" y="5" width="5" height="1"/><rect x="21" y="6" width="1" height="1"/><rect x="21" y="7" width="1" height="1"/><rect x="21" y="8" width="1" height="1"/><rect x="21" y="9" width="1" height="1"/></g><g fill="#000"><rect x="12" y="13" width="3" height="1"/><rect x="11" y="14" width="1" height="1"/><rect x="15" y="14" width="1" height="1"/><rect x="15" y="15" width="1" height="1"/><rect x="15" y="16" width="1" height="1"/><rect x="14" y="17" width="1" height="1"/><rect x="13" y="18" width="1" height="1"/><rect x="12" y="19" width="1" height="1"/><rect x="11" y="20" width="1" height="1"/><rect x="11" y="21" width="5" height="1"/><rect x="17" y="13" width="1" height="1"/><rect x="21" y="13" width="1" height="1"/><rect x="17" y="14" width="1" height="1"/><rect x="21" y="14" width="1" height="1"/><rect x="18" y="15" width="1" height="1"/><rect x="20" y="15" width="1" height="1"/><rect x="18" y="16" width="1" height="1"/><rect x="20" y="16" width="1" height="1"/><rect x="19" y="17" width="1" height="1"/><rect x="18" y="18" width="1" height="1"/><rect x="20" y="18" width="1" height="1"/><rect x="18" y="19" width="1" height="1"/><rect x="20" y="19" width="1" height="1"/><rect x="17" y="20" width="1" height="1"/><rect x="21" y="20" width="1" height="1"/><rect x="17" y="21" width="1" height="1"/><rect x="21" y="21" width="1" height="1"/></g></svg></div>
<div style="position:absolute;left:96px;top:119px;width:26px;height:26px;border:1px solid #000;background:#ECE9D8"><div style="position:absolute;left:0;top:0;width:24px;height:24px;border-top:1px solid #fff;border-left:1px solid #fff;border-bottom:1px solid #ACA899;border-right:1px solid #ACA899;"></div><svg width="26" height="26" shape-rendering="crispEdges"><g fill="#fff"><rect x="6" y="4" width="3" height="1"/><rect x="5" y="5" width="1" height="1"/><rect x="9" y="5" width="1" height="1"/><rect x="4" y="6" width="1" height="1"/><rect x="10" y="6" width="1" height="1"/><rect x="4" y="7" width="1" height="1"/><rect x="10" y="7" width="1" height="1"/><rect x="4" y="8" width="1" height="1"/><rect x="10" y="8" width="1" height="1"/><rect x="5" y="9" width="1" height="1"/><rect x="9" y="9" width="1" height="1"/><rect x="6" y="10" width="3" height="1"/></g><g fill="#000"><rect x="5" y="3" width="5" height="1"/><rect x="4" y="4" width="2" height="1"/><rect x="9" y="4" width="2" height="1"/><rect x="3" y="5" width="2" height="1"/><rect x="10" y="5" width="2" height="1"/><rect x="3" y="6" width="1" height="1"/><rect x="11" y="6" width="1" height="1"/><rect x="3" y="7" width="1" height="1"/><rect x="11" y="7" width="1" height="1"/><rect x="3" y="8" width="1" height="1"/><rect x="11" y="8" width="1" height="1"/><rect x="3" y="9" width="2" height="1"/><rect x="10" y="9" width="2" height="1"/><rect x="4" y="10" width="2" height="1"/><rect x="9" y="10" width="2" height="1"/><rect x="5" y="11" width="5" height="1"/></g><g fill="#000"><rect x="6" y="12" width="3" height="1"/><rect x="6" y="13" width="3" height="1"/><rect x="7" y="14" width="2" height="1"/><rect x="6" y="15" width="2" height="1"/><rect x="6" y="16" width="2" height="1"/><rect x="6" y="17" width="2" height="1"/><rect x="6" y="18" width="2" height="1"/><rect x="6" y="19" width="2" height="1"/><rect x="7" y="20" width="2" height="1"/><rect x="7" y="21" width="2" height="1"/></g><g fill="#000"><rect x="11" y="5" width="2" height="1"/><rect x="13" y="6" width="1" height="1"/><rect x="13" y="7" width="1" height="1"/><rect x="13" y="8" width="1" height="1"/><rect x="11" y="9" width="2" height="1"/></g><g fill="#000"><rect x="15" y="5" width="1" height="1"/><rect x="18" y="5" width="1" height="1"/><rect x="15" y="6" width="1" height="1"/><rect x="18" y="6" width="1" height="1"/><rect x="15" y="7" width="1" height="1"/><rect x="18" y="7" width="1" height="1"/><rect x="15" y="8" width="1" height="1"/><rect x="18" y="8" width="1" height="1"/><rect x="16" y="9" width="2" height="1"/></g><g fill="#000"><rect x="19" y="5" width="5" height="1"/><rect x="21" y="6" width="1" height="1"/><rect x="21" y="7" width="1" height="1"/><rect x="21" y="8" width="1" height="1"/><rect x="21" y="9" width="1" height="1"/></g><g fill="#000"><rect x="9" y="14" width="3" height="1"/><rect x="13" y="14" width="1" height="1"/><rect x="16" y="14" width="1" height="1"/><rect x="18" y="14" width="1" height="1"/><rect x="22" y="14" width="1" height="1"/><rect x="9" y="15" width="1" height="1"/><rect x="13" y="15" width="1" height="1"/><rect x="16" y="15" width="1" height="1"/><rect x="18" y="15" width="1" height="1"/><rect x="22" y="15" width="1" height="1"/><rect x="9" y="16" width="2" height="1"/><rect x="13" y="16" width="1" height="1"/><rect x="16" y="16" width="1" height="1"/><rect x="18" y="16" width="1" height="1"/><rect x="22" y="16" width="1" height="1"/><rect x="9" y="17" width="1" height="1"/><rect x="13" y="17" width="1" height="1"/><rect x="16" y="17" width="1" height="1"/><rect x="18" y="17" width="1" height="1"/><rect x="22" y="17" width="1" height="1"/><rect x="9" y="18" width="1" height="1"/><rect x="14" y="18" width="2" height="1"/><rect x="18" y="18" width="2" height="1"/><rect x="22" y="18" width="2" height="1"/></g></svg></div>
<div style="position:absolute;left:133px;top:119px;width:26px;height:26px;border:1px solid #000;background:#ECE9D8"><div style="position:absolute;left:0;top:0;width:24px;height:24px;border-top:1px solid #fff;border-left:1px solid #fff;border-bottom:1px solid #ACA899;border-right:1px solid #ACA899;"></div><svg width="26" height="26"><path d="M3.5 20V17.5H6.3L8.5 12 9.4 5.5 10.3 13 13.8 15.3 15.6 17.5 18.6 18 20.8 19.6" stroke="#000" fill="none" stroke-width="1.2"/></svg></div>
<div style="position:absolute;left:163px;top:119px;width:26px;height:26px;border:1px solid #000;background:#ECE9D8"><div style="position:absolute;left:0;top:0;width:24px;height:24px;border-top:1px solid #ACA899;border-left:1px solid #ACA899;border-bottom:1px solid #fff;border-right:1px solid #fff;"></div><svg width="26" height="26" shape-rendering="crispEdges"><path d="M4.5 23V14.5H7.5V10.5H10.5V7.5H13.5V14.5H16.5V11.5H19.5V13.5H22.5V23" stroke="#000" fill="none"/></svg></div>
<div style="position:absolute;left:193px;top:119px;width:26px;height:26px;border:1px solid #000;background:#ECE9D8"><div style="position:absolute;left:0;top:0;width:24px;height:24px;border-top:1px solid #fff;border-left:1px solid #fff;border-bottom:1px solid #ACA899;border-right:1px solid #ACA899;"></div><svg width="26" height="26" shape-rendering="crispEdges"><g stroke="#000" fill="none"><path d="M3.5 22V13.5H6.5V22"/><path d="M6.5 22V9.5H9.5V22"/><path d="M9.5 22V6.5H12.5V22"/><path d="M12.5 22V7.5H15.5V22"/><path d="M15.5 22V10.5H18.5V22"/><path d="M18.5 22V12.5H21.5V22"/></g></svg></div>
<div style="position:absolute;left:230px;top:119px;width:26px;height:26px;border:1px solid #000;background:#ECE9D8"><div style="position:absolute;left:0;top:0;width:24px;height:24px;border-top:1px solid #ACA899;border-left:1px solid #ACA899;border-bottom:1px solid #fff;border-right:1px solid #fff;"></div><svg width="26" height="26" shape-rendering="crispEdges"><rect x="2" y="2" width="20" height="20" fill="#fff" stroke="#000"/><rect x="2" y="2" width="20" height="3" fill="#000"/><g fill="#fff"><rect x="5" y="3" width="1" height="1"/><rect x="7" y="3" width="1" height="1"/><rect x="9" y="3" width="1" height="1"/><rect x="11" y="3" width="1" height="1"/><rect x="13" y="3" width="1" height="1"/><rect x="15" y="3" width="1" height="1"/><rect x="17" y="3" width="1" height="1"/><rect x="19" y="3" width="1" height="1"/></g><rect x="6.5" y="7.5" width="14" height="3" fill="none" stroke="#000"/><rect x="12.5" y="12.5" width="8" height="3" fill="none" stroke="#000"/><rect x="12.5" y="17.5" width="8" height="3" fill="none" stroke="#000"/><path d="M5 13h2M8 13h2M6 18h4" stroke="#000"/></svg></div>
<div style="position:absolute;left:260px;top:119px;width:26px;height:26px;border:1px solid #000;background:#ECE9D8"><div style="position:absolute;left:0;top:0;width:24px;height:24px;border-top:1px solid #fff;border-left:1px solid #fff;border-bottom:1px solid #ACA899;border-right:1px solid #ACA899;"></div><div style="position:absolute;left:0;top:4px;width:26px;text-align:center;font-family:'Liberation Serif',serif;font-size:13px;-webkit-text-stroke:0.12px #000">Mrk</div></div>
<div style="position:absolute;left:297px;top:119px;width:26px;height:26px;border:1px solid #000;background:#ECE9D8"><div style="position:absolute;left:0;top:0;width:24px;height:24px;border-top:1px solid #fff;border-left:1px solid #fff;border-bottom:1px solid #ACA899;border-right:1px solid #ACA899;"></div><svg width="26" height="26" shape-rendering="crispEdges"><g fill="#000"><rect x="4" y="2" width="1" height="20"/><rect x="4" y="21" width="17" height="1"/><rect x="8" y="3" width="9" height="1"/><rect x="8" y="18" width="9" height="1"/><rect x="12" y="4" width="1" height="14"/><path d="M10 7h5L12.5 4z"/><path d="M10 15h5L12.5 18z"/></g></svg></div>
<div style="position:absolute;left:334px;top:127px;white-space:nowrap;font-size:12px">Plot Top:</div>
<div style="position:absolute;left:385px;top:123px;width:54px;height:18px;background:#fff;border:1px solid #000"><div style="position:absolute;left:2px;top:2px;font-size:12px">10.00</div></div>
<div style="position:absolute;left:443px;top:123px;width:12px;height:10px;background:#ECE9D8;box-shadow:inset 1px 1px 0 #fff,inset -1px -1px 0 #716F64,inset -2px -2px 0 #ACA899"><svg style="left:3px;top:3px" width="5" height="3" shape-rendering="crispEdges"><path d="M2 0h1v1h1v1h1v1h-5v-1h1v-1h1z" fill="#000"/></svg></div>
<div style="position:absolute;left:443px;top:133px;width:12px;height:10px;background:#ECE9D8;box-shadow:inset 1px 1px 0 #fff,inset -1px -1px 0 #716F64,inset -2px -2px 0 #ACA899"><svg style="left:3px;top:3px" width="5" height="3" shape-rendering="crispEdges"><path d="M0 0h5v1h-1v1h-1v1h-1v-1h-1v-1h-1z" fill="#000"/></svg></div>
<div style="position:absolute;left:464px;top:127px;white-space:nowrap;font-size:12px">Plot Range:</div>
<div style="position:absolute;left:531px;top:123px;width:55px;height:18px;background:#fff;border:1px solid #000"><div style="position:absolute;left:2px;top:2px;font-size:12px">175.0</div></div>
<div style="position:absolute;left:589px;top:123px;width:12px;height:10px;background:#ECE9D8;box-shadow:inset 1px 1px 0 #fff,inset -1px -1px 0 #716F64,inset -2px -2px 0 #ACA899"><svg style="left:3px;top:3px" width="5" height="3" shape-rendering="crispEdges"><path d="M2 0h1v1h1v1h1v1h-5v-1h1v-1h1z" fill="#000"/></svg></div>
<div style="position:absolute;left:589px;top:133px;width:12px;height:10px;background:#ECE9D8;box-shadow:inset 1px 1px 0 #fff,inset -1px -1px 0 #716F64,inset -2px -2px 0 #ACA899"><svg style="left:3px;top:3px" width="5" height="3" shape-rendering="crispEdges"><path d="M0 0h5v1h-1v1h-1v1h-1v-1h-1v-1h-1z" fill="#000"/></svg></div>
<div style="position:absolute;left:614px;top:127px;white-space:nowrap;font-size:12px">Peak Hold:</div>
<div style="position:absolute;left:677px;top:123px;width:67px;height:18px;background:#fff;border-top:2px solid #8E8B7C;border-left:2px solid #8E8B7C;border-bottom:2px solid #fff;border-right:2px solid #fff;box-shadow:inset -1px -1px 0 #ECE9D8"><div style="position:absolute;left:2px;top:3px;font-size:12px">Off</div><div style="position:absolute;right:0px;top:0px;width:12px;height:14px;background:#ECE9D8;border-top:1px solid #ECE9D8;border-left:1px solid #ECE9D8;border-bottom:1px solid #716F64;border-right:1px solid #716F64;box-shadow:inset 1px 1px 0 #fff,inset -1px -1px 0 #ACA899"><svg style="left:3px;top:5px" width="7" height="4" shape-rendering="crispEdges"><path d="M0 0h7v1h-1v1h-1v1h-1v1h-1v-1h-1v-1h-1v-1h-1z" fill="#000"/></svg></div></div>
<div style="position:absolute;left:0px;top:46px;width:1px;height:691px;background:#B8B4A8"></div>
<div style="position:absolute;left:1px;top:46px;width:1px;height:72px;background:#D8D4C8"></div>
<div style="position:absolute;left:1px;top:118px;width:1px;height:591px;background:#716F64"></div>
<div style="position:absolute;left:2px;top:118px;width:1px;height:591px;background:#ACA899"></div>
<div style="position:absolute;left:3px;top:118px;width:1px;height:591px;background:#716F64"></div>
<div style="position:absolute;left:4px;top:149px;width:1px;height:560px;background:#F4F2E4"></div>
<div style="position:absolute;left:1px;top:709px;width:1px;height:28px;background:#8A877A"></div>
<div style="position:absolute;left:64px;top:166px;width:852px;height:2px;background:#ACA899"></div>
<div style="position:absolute;left:64px;top:166px;width:2px;height:514px;background:#ACA899"></div>
<div style="position:absolute;left:916px;top:166px;width:2px;height:514px;background:#fff"></div>
<div style="position:absolute;left:64px;top:678px;width:854px;height:2px;background:#fff"></div>
<div style="position:absolute;left:63px;top:165px;width:855px;height:1px;background:#F4F2E8"></div>
<div style="position:absolute;left:63px;top:165px;width:1px;height:515px;background:#F4F2E8"></div>
<div style="position:absolute;left:66px;top:168px;width:850px;height:498px;background:#FFFFE0"></div>
<svg style="left:0;top:0" width="1024" height="768" shape-rendering="crispEdges"><path d="M66 167.5H916" stroke="#C0C0C0" stroke-width="1"/><path d="M64 167.5H66" stroke="#000" stroke-width="1"/><path d="M66 196.5H916" stroke="#C0C0C0" stroke-width="1"/><path d="M64 196.5H66" stroke="#000" stroke-width="1"/><path d="M66 224.5H916" stroke="#C0C0C0" stroke-width="1"/><path d="M64 224.5H66" stroke="#000" stroke-width="1"/><path d="M66 253.5H916" stroke="#C0C0C0" stroke-width="1"/><path d="M64 253.5H66" stroke="#000" stroke-width="1"/><path d="M66 281.5H916" stroke="#C0C0C0" stroke-width="1"/><path d="M64 281.5H66" stroke="#000" stroke-width="1"/><path d="M66 310.5H916" stroke="#C0C0C0" stroke-width="1"/><path d="M64 310.5H66" stroke="#000" stroke-width="1"/><path d="M66 338.5H916" stroke="#C0C0C0" stroke-width="1"/><path d="M64 338.5H66" stroke="#000" stroke-width="1"/><path d="M66 367.5H916" stroke="#C0C0C0" stroke-width="1"/><path d="M64 367.5H66" stroke="#000" stroke-width="1"/><path d="M66 395.5H916" stroke="#C0C0C0" stroke-width="1"/><path d="M64 395.5H66" stroke="#000" stroke-width="1"/><path d="M66 423.5H916" stroke="#C0C0C0" stroke-width="1"/><path d="M64 423.5H66" stroke="#000" stroke-width="1"/><path d="M66 452.5H916" stroke="#C0C0C0" stroke-width="1"/><path d="M64 452.5H66" stroke="#000" stroke-width="1"/><path d="M66 480.5H916" stroke="#C0C0C0" stroke-width="1"/><path d="M64 480.5H66" stroke="#000" stroke-width="1"/><path d="M66 509.5H916" stroke="#C0C0C0" stroke-width="1"/><path d="M64 509.5H66" stroke="#000" stroke-width="1"/><path d="M66 537.5H916" stroke="#C0C0C0" stroke-width="1"/><path d="M64 537.5H66" stroke="#000" stroke-width="1"/><path d="M66 566.5H916" stroke="#C0C0C0" stroke-width="1"/><path d="M64 566.5H66" stroke="#000" stroke-width="1"/><path d="M66 594.5H916" stroke="#C0C0C0" stroke-width="1"/><path d="M64 594.5H66" stroke="#000" stroke-width="1"/><path d="M66 623.5H916" stroke="#C0C0C0" stroke-width="1"/><path d="M64 623.5H66" stroke="#000" stroke-width="1"/><path d="M66 651.5H916" stroke="#C0C0C0" stroke-width="1"/><path d="M64 651.5H66" stroke="#000" stroke-width="1"/><path d="M95.5 168V666" stroke="#C0C0C0" stroke-width="1"/><path d="M95.5 678V681" stroke="#000" stroke-width="1"/><path d="M121.5 168V666" stroke="#C0C0C0" stroke-width="1"/><path d="M121.5 678V681" stroke="#000" stroke-width="1"/><path d="M144.5 168V666" stroke="#C0C0C0" stroke-width="1"/><path d="M144.5 678V681" stroke="#000" stroke-width="1"/><path d="M165.5 168V666" stroke="#C0C0C0" stroke-width="1"/><path d="M165.5 678V681" stroke="#000" stroke-width="1"/><path d="M299.5 168V666" stroke="#C0C0C0" stroke-width="1"/><path d="M299.5 678V681" stroke="#000" stroke-width="1"/><path d="M378.5 168V666" stroke="#C0C0C0" stroke-width="1"/><path d="M378.5 678V681" stroke="#000" stroke-width="1"/><path d="M434.5 168V666" stroke="#C0C0C0" stroke-width="1"/><path d="M434.5 678V681" stroke="#000" stroke-width="1"/><path d="M477.5 168V666" stroke="#C0C0C0" stroke-width="1"/><path d="M477.5 678V681" stroke="#000" stroke-width="1"/><path d="M513.5 168V666" stroke="#C0C0C0" stroke-width="1"/><path d="M513.5 678V681" stroke="#000" stroke-width="1"/><path d="M543.5 168V666" stroke="#C0C0C0" stroke-width="1"/><path d="M543.5 678V681" stroke="#000" stroke-width="1"/><path d="M569.5 168V666" stroke="#C0C0C0" stroke-width="1"/><path d="M569.5 678V681" stroke="#000" stroke-width="1"/><path d="M591.5 168V666" stroke="#C0C0C0" stroke-width="1"/><path d="M591.5 678V681" stroke="#000" stroke-width="1"/><path d="M612.5 168V666" stroke="#C0C0C0" stroke-width="1"/><path d="M612.5 678V681" stroke="#000" stroke-width="1"/><path d="M746.5 168V666" stroke="#C0C0C0" stroke-width="1"/><path d="M746.5 678V681" stroke="#000" stroke-width="1"/><path d="M825.5 168V666" stroke="#C0C0C0" stroke-width="1"/><path d="M825.5 678V681" stroke="#000" stroke-width="1"/><path d="M881.5 168V666" stroke="#C0C0C0" stroke-width="1"/><path d="M881.5 678V681" stroke="#000" stroke-width="1"/><path d="M66.5 678V681" stroke="#000" stroke-width="1"/><path d="M66.5 168V666" stroke="#C0C0C0" stroke-width="1"/></svg>
<div style="position:absolute;left:0;top:161.8px;width:59px;text-align:right;font-size:12px;color:#000">10.0</div>
<div style="position:absolute;left:0;top:190.3px;width:59px;text-align:right;font-size:12px;color:#000">0.0</div>
<div style="position:absolute;left:0;top:218.8px;width:59px;text-align:right;font-size:12px;color:#000">-10.0</div>
<div style="position:absolute;left:0;top:247.2px;width:59px;text-align:right;font-size:12px;color:#000">-20.0</div>
<div style="position:absolute;left:0;top:275.6px;width:59px;text-align:right;font-size:12px;color:#000">-30.0</div>
<div style="position:absolute;left:0;top:304.1px;width:59px;text-align:right;font-size:12px;color:#000">-40.0</div>
<div style="position:absolute;left:0;top:332.5px;width:59px;text-align:right;font-size:12px;color:#000">-50.0</div>
<div style="position:absolute;left:0;top:361.0px;width:59px;text-align:right;font-size:12px;color:#000">-60.0</div>
<div style="position:absolute;left:0;top:389.4px;width:59px;text-align:right;font-size:12px;color:#000">-70.0</div>
<div style="position:absolute;left:0;top:417.9px;width:59px;text-align:right;font-size:12px;color:#000">-80.0</div>
<div style="position:absolute;left:0;top:446.4px;width:59px;text-align:right;font-size:12px;color:#000">-90.0</div>
<div style="position:absolute;left:0;top:474.8px;width:59px;text-align:right;font-size:12px;color:#000">-100.0</div>
<div style="position:absolute;left:0;top:503.2px;width:59px;text-align:right;font-size:12px;color:#000">-110.0</div>
<div style="position:absolute;left:0;top:531.7px;width:59px;text-align:right;font-size:12px;color:#000">-120.0</div>
<div style="position:absolute;left:0;top:560.1px;width:59px;text-align:right;font-size:12px;color:#000">-130.0</div>
<div style="position:absolute;left:0;top:588.6px;width:59px;text-align:right;font-size:12px;color:#000">-140.0</div>
<div style="position:absolute;left:0;top:617.0px;width:59px;text-align:right;font-size:12px;color:#000">-150.0</div>
<div style="position:absolute;left:0;top:645.5px;width:59px;text-align:right;font-size:12px;color:#000">-160.0</div>
<div style="position:absolute;left:26.0px;top:682px;width:80px;text-align:center;font-size:12px">600</div>
<div style="position:absolute;left:81.0px;top:682px;width:80px;text-align:center;font-size:12px">800</div>
<div style="position:absolute;left:125.0px;top:682px;width:80px;text-align:center;font-size:12px">1.0k</div>
<div style="position:absolute;left:259.0px;top:682px;width:80px;text-align:center;font-size:12px">2.0k</div>
<div style="position:absolute;left:338.0px;top:682px;width:80px;text-align:center;font-size:12px">3.0k</div>
<div style="position:absolute;left:394.0px;top:682px;width:80px;text-align:center;font-size:12px">4.0k</div>
<div style="position:absolute;left:437.0px;top:682px;width:80px;text-align:center;font-size:12px">5.0k</div>
<div style="position:absolute;left:473.0px;top:682px;width:80px;text-align:center;font-size:12px">6.0k</div>
<div style="position:absolute;left:529.0px;top:682px;width:80px;text-align:center;font-size:12px">8.0k</div>
<div style="position:absolute;left:572.0px;top:682px;width:80px;text-align:center;font-size:12px">10.0k</div>
<div style="position:absolute;left:706.0px;top:682px;width:80px;text-align:center;font-size:12px">20.0k</div>
<div style="position:absolute;left:785.0px;top:682px;width:80px;text-align:center;font-size:12px">30.0k</div>
<div style="position:absolute;left:841.0px;top:682px;width:80px;text-align:center;font-size:12px">40.0k</div>
<div style="position:absolute;left:471px;top:694px;white-space:nowrap;font-size:12px">Frequency (Hz)</div>
<div style="position:absolute;left:481px;top:151px;white-space:nowrap;font-size:12px">Left</div>
<div style="position:absolute;left:-13px;top:415px;width:60px;height:16px;transform:rotate(-90deg);font-size:13.5px;text-align:center;white-space:nowrap">dBV rms</div>
<div style="position:absolute;left:8px;top:152px;width:8px;height:8px;border:1px solid #000;background:#F8F6EE"></div>
<div style="position:absolute;left:11px;top:157px;width:4px;height:1px;background:#000"></div>
<div style="position:absolute;left:932px;top:696px;width:8px;height:8px;border:1px solid #000;background:#F8F6EE"></div>
<div style="position:absolute;left:934px;top:700px;width:5px;height:1px;background:#000"></div>
<div style="position:absolute;left:936px;top:698px;width:1px;height:5px;background:#000"></div>
<div style="position:absolute;left:1008px;top:696px;width:8px;height:8px;border:1px solid #000;background:#F8F6EE"></div>
<div style="position:absolute;left:1011px;top:701px;width:4px;height:1px;background:#000"></div>
<div style="position:absolute;left:66px;top:666px;width:850px;height:12px;background-color:#F4F3EE;background-image:repeating-conic-gradient(#E6E3D2 0 25%,#fff 0 50%);background-size:2px 2px"></div>
<div style="position:absolute;left:66px;top:666px;width:17px;height:12px;background:#ECE9D8;box-shadow:inset 1px 1px 0 #fff,inset -1px -1px 0 #716F64,inset -2px -2px 0 #ACA899"></div>
<svg style="left:72px;top:669px" width="4" height="7"><path d="M3.5 0v7L0 3.5z" fill="#000"/></svg>
<div style="position:absolute;left:882px;top:666px;width:17px;height:12px;background:#ECE9D8;box-shadow:inset 1px 1px 0 #fff,inset -1px -1px 0 #716F64,inset -2px -2px 0 #ACA899"></div>
<div style="position:absolute;left:899px;top:666px;width:17px;height:12px;background:#ECE9D8;box-shadow:inset 1px 1px 0 #fff,inset -1px -1px 0 #716F64,inset -2px -2px 0 #ACA899"></div>
<svg style="left:906px;top:669px" width="4" height="7"><path d="M0 0v7L3.5 3.5z" fill="#000"/></svg>
<div style="position:absolute;left:886px;top:168px;white-space:nowrap;font-family:'Liberation Serif',serif;font-size:25px;color:#8C8C8C"><i><b>S</b></i></div>
<div style="position:absolute;left:900px;top:174px;white-space:nowrap;font-family:'Liberation Serif',serif;font-size:17px;color:#8C8C8C"><i>+</i></div>
<svg style="left:0;top:0" width="1024" height="768"><g shape-rendering="crispEdges" fill="none" stroke="#0000FF" stroke-width="2"></g><g fill="none" stroke="#0000FF" stroke-width="1" shape-rendering="crispEdges"><path d="M66 641V628H68L68 628H69V626H70V625H71V625H72V623H73V623H74V621H75V618H76V624H77V625H78V621H79V624H80V622H81V618H82V622H83V619H84V620H85V623H86V622H87V625H88V625H89V621H90V626H91V622H92V625H93V625H94V625H95V626H96V623H97V622H98V622H99V621H100V617H101V616H102V624H103V621H104V622H105V618H106V621H107V622H108V622H109V617H110V621H111V619H112V622H113V622H114V620H115V620H116V620H117V619H118V618H119V618H120V616H121V610H122V618H123V617H124V619H125V618H126V616H127V617H128V618H129V617H130V612H131V611H132V616H133V607H134V612H135V612H136V613H137V612H138V612H139V607H140V612H141V610H142V610H143V601H144V597H145V592H146V601H147V599H148V598H149V600H150V596H151V592H152V595H153V594H154V590H155V590H156V581H157V574H158V572H159V575H160V570H161V561H162V555"/><path d="M171 562H172V572H173V572H174V574H175V576H176V581H177V587H178V589H179V584H180V594H181V597H182V599H183V602H184V603H185V596H186V603H187V604H188V603H189V603H190V604H191V609H192V610H193V610H194V608H195V607H196V611H197V607H198V611H199V611H200V612H201V604H202V609H203V613H204V614H205V614H206V615H207V610H208V615H209V616H210V616H211V614H212V620H213V618H214V621H215V620H216V616H217V620H218V624H219V624H220V620H221V625H222V627H223V624H224V620H225V623H226V626H227V625H228V620H229V626H230V624H231V627H232V621H233V628H234V628H235V628H236V627H237V626H238V628H239V624H240V631H241V628H242V620H243V629H244V629H245V629H246V624H247V629H248V629H249V629H250V627H251V627H252V627H253V626H254V624H255V626H256V621H257V627H258V621H259V629H260V629H261V629H262V629H263V626H264V627H265V628H266V627H267V627H268V628H269V626H270V626H271V628H272V629H273V629H274V627H275V627H276V628H277V630H278V628H279V630H280V628H281V633H282V633H283V631H284V627H285V631H286V631H287V631H288V631H289V623H290V627H291V631H292V632H293V633H294V632H295V632H296V630H297V631H298V634H299V633H300V632H301V631H302V628H303V631H304V632H305V632H306V626H307V633H308V634H309V635H310V630H311V634H312V634H313V636H314V632H315V632H316V632H317V632H318V632H319V633H320V628H321V630H322V630H323V630H324V630H325V630H326V630H327V631H328V628H329V628H330V633H331V634H332V631H333V632H334V630H335V632H336V631H337V633H338V633H339V629H340V632H341V632H342V629H343V634H344V634H345V634H346V630H347V633H348V631H349V631H350V634H351V634H352V634H353V632H354V634H355V626H356V635H357V635H358V635H359V635H360V629H361V632H362V635H363V635H364V630H365V635H366V635H367V635H368V635H369V631H370V635H371V632H372V635H373V627H374V637H375V635H376V635H377V635H378V635H379V634H380V634H381V632H382V628H383V633H384V634H385V633H386V635H387V633H388V635H389V632H390V635H391V630H392V631H393V635H394V635H395V635H396V633H397V633H398V633H399V633H400V632H401V631H402V634H403V629H404V624H405V628H406V631H407V629H408V632H409V634H410V633H411V632H412V632H413V624H414V632H415V627H416V627H417V631H418V626H419V629H420V632H421V632H422V627H423V632H424V629H425V634H426V630H427V632H428V632H429V632H430V631H431V631H432V633H433V631H434V634H435V631H436V628H437V631H438V631H439V631H440V632H441V632H442V633H443V631H444V631H445V631H446V631H447V631H448V631H449V631H450V631H451V632H452V632H453V632H454V632H455V635H456V631H457V627H458V629H459V631H460V631H461V631H462V631H463V631H464V629H465V631H466V631H467V631H468V633H469V625H470V631H471V634H472V634H473V635H474V635H475V635H476V635H477V636H478V635H479V635H480V635H481V633H482V631H483V635H484V630H485V628H486V633H487V626H488V634H489V634H490V634H491V634H492V636H493V630H494V633H495V627H496V635H497V633H498V635H499V635H500V629H501V635H502V637H503V635H504V635H505V635H506V635H507V632H508V636H509V634H510V636H511V635H512V635H513V635H514V636H515V636H516V635H517V635H518V627H519V635H520V631H521V630H522V635H523V635H524V631H525V634H526V629H527V635H528V633H529V633H530V631H531V632H532V631H533V626H534V632H535V628H536V631H537V631H538V631H539V628H540V630H541V632H542V623H543V632H544V629H545V626H546V631H547V631H548V631H549V631H550V628H551V634H552V631H553V631H554V631H555V629H556V631H557V633H558V633H559V633H560V634H561V632H562V629H563V633H564V634H565V628H566V635H567V632H568V635H569V630H570V630H571V635H572V635H573V635H574V632H575V634H576V631H577V629H578V632H579V633H580V633H581V633H582V633H583V630H584V637H585V635H586V635H587V632H588V634H589V629H590V635H591V633H592V633H593V633H594V633H595V625H596V634H597V633H598V632H599V634H600V637H601V633H602V633H603V635H604V634H605V627H606V630H607V633H608V636H609V634H610V628H611V630H612V626H613V630H614V629H615V627H616V631H617V628H618V632H619V632H620V635H621V631H622V631H623V632H624V632H625V634H626V632H627V635H628V635H629V630H630V634H631V634H632V634H633V635H634V633H635V635H636V629H637V634H638V634H639V634H640V634H641V631H642V631H643V634H644V633H645V633H646V636H647V637H648V632H649V635H650V635H651V635H652V636H653V629H654V635H655V635H656V636H657V631H658V635H659V635H660V632H661V635H662V635H663V631H664V628H665V630H666V632H667V630H668V627H669V623H670V634H671V633H672V631H673V631H674V633H675V633H676V633H677V633H678V631H679V626H680V626H681V623H682V623H683V633H684V631H685V631H686V631H687V623H688V631H689V634H690V625H691V633H692V623H693V631H694V628H695V632H696V632H697V634H698V631H699V632H700V632H701V631H702V630H703V624H704V631H705V628H706V631H707V631H708V630H709V629H710V631H711V630H712V630H713V630H714V627H715V633H716V633H717V631H718V632H719V632H720V632H721V630H722V626H723V626H724V631H725V631H726V631H727V632H728V632H729V631H730V633H731V633H732V633H733V637H734V634H735V637H736V628H737V634H738V634H739V626H740V632H741V631H742V634H743V634H744V634H745V637H746V634H747V634H748V631H749V634H750V634H751V637H752V633H753V633H754V631H755V631H756V631H757V629H758V629H759V631H760V631H761V630H762V630H763V624H764V630H765V630H766V630H767V624H768V630H769V631H770V632H771V629H772V629H773V630H774V631H775V630H776V627H777V632H778V633H779V625H780V633H781V634H782V634H783V634H784V634H785V634H786V634H787V634H788V632H789V632H790V628H791V632H792V622H793V631H794V630H795V631H796V631H797V632H798V634H799V634H800V634H801V634H802V634H803V635H804V634H805V627H806V633H807V636H808V637H809V634H810V628H811V623H812V631H813V627H814V630H815V632H816V634H817V630H818V630H819V630H820V624H821V630H822V631H823V627H824V631H825V631H826V631H827V630H828V628H829V625H830V626H831V631H832V630H833V633H834V630H835V630H836V626H837V632H838V630H839V633H840V622H841V630H842V631H843V631H844V631H845V626H846V633H847V632H848V630H849V632H850V632H851V634H852V632H853V628H854V633H855V627H856V629H857V633H858V633H859V635H860V633H861V625H862V624H863V630H864V632H865V634H866V623H867V631H868V625H869V625H870V627H871V630H872V630H873V628H874V627H875V626H876V632H877V632H878V631H879V633H880V630H881V627H882V622H883V631H884V624H885V627H886V624H887V626H888V629H889V631H890V631H891V630H892V625H893V631H894V622H895V626H896V627H897V626H898V626H899V626H900V628H901V624H902V626H903V627H904V623H905V625H906V627H907V620H908V623H909V617H910V620H911V619H912V621H913V620H914V615H915V620"/></g><g shape-rendering="crispEdges" fill="none" stroke="#0000FF" stroke-width="2"><path d="M83 625V588V625 M110 623V610V623 M134 615V599V615 M210 619V599V619 M252 628V605V628 M264 628V610V628 M296 631V619V631 M301 632V564V632 M348 633V621V633 M347 633V621V633 M380 634V524V634 M436 634V616V634 M479 634V577V634 M515 634V606V634 M545 634V618V634 M562 634V621V634 M567 634V617V634 M570 634V609V634 M576 634V622V634 M593 634V592V634 M614 634V621V634 M632 634V620V634 M665 634V599V634 M693 634V612V634 M705 633V616V633 M728 633V621V633 M776 633V624V633 M792 633V622V633 M795 633V581V633 M802 633V577V633 M810 633V581V633 M849 633V592V633 M855 633V589V633 M860 633V592V633 M883 632V624V632"/><path d="M167 377V211"/></g><g shape-rendering="crispEdges" fill="none" stroke="#0000FF" stroke-width="1"><path d="M162.5 562V541.5H163.5V499.5H164.5V377.5H165.5V377M167.5 377V464.5H168.5V525.5H169.5V553.5H170.5V562"/></g></svg>
<div style="position:absolute;left:199px;top:199px;width:233px;height:74px;background:linear-gradient(#3A86F4 0px,#1A66EC 2px,#0A58E4 5px,#0052DE 12px,#004AD8 22px);border-radius:2px 2px 0 0"></div>
<div style="position:absolute;left:203px;top:221px;width:225px;height:48px;background:#fff;border-top:2px solid #000;border-left:1px solid #000;box-sizing:border-box"></div>
<div style="position:absolute;left:203px;top:205px;white-space:nowrap;font-weight:bold;font-size:11.5px;color:#fff">THD</div>
<div style="position:absolute;left:413px;top:205px;width:11px;height:11px;border:1px solid #fff;border-radius:2px;background:#D56B4C"></div>
<svg style="left:413px;top:205px" width="13" height="13"><path d="M3.5 3.5l6 6M9.5 3.5l-6 6" stroke="#fff" stroke-width="1.8"/></svg>
<div style="position:absolute;left:205px;top:229px;white-space:nowrap;font-size:36px;color:#000;line-height:40px;letter-spacing:1.1px">0.000326 %</div>
<div style="position:absolute;left:483px;top:199px;width:202px;height:74px;background:linear-gradient(#A6B8EC 0px,#8CA4E8 4px,#7E98E4 12px,#7A94E0 22px);border-radius:2px 2px 0 0"></div>
<div style="position:absolute;left:487px;top:221px;width:194px;height:48px;background:#fff;border-top:2px solid #000;border-left:1px solid #000;box-sizing:border-box"></div>
<div style="position:absolute;left:487px;top:205px;white-space:nowrap;font-weight:bold;font-size:11.5px;color:#DDE6F8">Peak Amplitude</div>
<div style="position:absolute;left:666px;top:205px;width:11px;height:11px;border:1px solid #fff;border-radius:2px;background:#B77E90"></div>
<svg style="left:666px;top:205px" width="13" height="13"><path d="M3.5 3.5l6 6M9.5 3.5l-6 6" stroke="#fff" stroke-width="1.8"/></svg>
<div style="position:absolute;left:499px;top:229px;white-space:nowrap;font-size:36px;color:#000;line-height:40px;letter-spacing:1.4px">-4.83 dBV</div>
<div style="position:absolute;left:299px;top:339px;white-space:nowrap;font-size:24px;line-height:28px">YES-6</div>
<div style="position:absolute;left:299px;top:366px;white-space:nowrap;font-size:24px;line-height:28px">Рвых=100W&nbsp;&nbsp;&nbsp;&nbsp;Rн=4 Ом</div>
<div style="position:absolute;left:944px;top:154px;font-size:12px;text-decoration:underline">Overlays</div>
<div style="position:absolute;left:920px;top:170px;width:22px;height:14px;transform:rotate(-90deg);font-size:12px;text-align:center">Set</div>
<div style="position:absolute;left:936px;top:171px;width:20px;height:14px;transform:rotate(-90deg);font-size:12px;text-align:center">On</div>
<div style="position:absolute;left:923px;top:189px;width:14px;height:14px;background:#ECE9D8;box-shadow:inset 1px 1px 0 #fff,inset -1px -1px 0 #716F64,inset -2px -2px 0 #ACA899"><div style="position:absolute;left:0;top:0px;width:13px;text-align:center;font-size:12px">1</div></div>
<div style="position:absolute;left:940px;top:190px;width:13px;height:13px;box-sizing:border-box;background:#fff;border-top:1px solid #ACA899;border-left:1px solid #ACA899;border-right:1px solid #fff;border-bottom:1px solid #fff;box-shadow:inset 1px 1px 0 #716F64,inset -1px -1px 0 #ECE9D8"></div>
<div style="position:absolute;left:956px;top:190px;white-space:nowrap;font-size:12px;color:#008000;letter-spacing:-0.3px">Overlay 1</div>
<div style="position:absolute;left:923px;top:205px;width:14px;height:14px;background:#ECE9D8;box-shadow:inset 1px 1px 0 #fff,inset -1px -1px 0 #716F64,inset -2px -2px 0 #ACA899"><div style="position:absolute;left:0;top:0px;width:13px;text-align:center;font-size:12px">2</div></div>
<div style="position:absolute;left:940px;top:206px;width:13px;height:13px;box-sizing:border-box;background:#fff;border-top:1px solid #ACA899;border-left:1px solid #ACA899;border-right:1px solid #fff;border-bottom:1px solid #fff;box-shadow:inset 1px 1px 0 #716F64,inset -1px -1px 0 #ECE9D8"></div>
<div style="position:absolute;left:956px;top:206px;white-space:nowrap;font-size:12px;color:#00A0A0;letter-spacing:-0.3px">Overlay 2</div>
<div style="position:absolute;left:923px;top:221px;width:14px;height:14px;background:#ECE9D8;box-shadow:inset 1px 1px 0 #fff,inset -1px -1px 0 #716F64,inset -2px -2px 0 #ACA899"><div style="position:absolute;left:0;top:0px;width:13px;text-align:center;font-size:12px">3</div></div>
<div style="position:absolute;left:940px;top:222px;width:13px;height:13px;box-sizing:border-box;background:#fff;border-top:1px solid #ACA899;border-left:1px solid #ACA899;border-right:1px solid #fff;border-bottom:1px solid #fff;box-shadow:inset 1px 1px 0 #716F64,inset -1px -1px 0 #ECE9D8"></div>
<div style="position:absolute;left:956px;top:222px;white-space:nowrap;font-size:12px;color:#800080;letter-spacing:-0.3px">Overlay 3</div>
<div style="position:absolute;left:923px;top:237px;width:14px;height:14px;background:#ECE9D8;box-shadow:inset 1px 1px 0 #fff,inset -1px -1px 0 #716F64,inset -2px -2px 0 #ACA899"><div style="position:absolute;left:0;top:0px;width:13px;text-align:center;font-size:12px">4</div></div>
<div style="position:absolute;left:940px;top:238px;width:13px;height:13px;box-sizing:border-box;background:#fff;border-top:1px solid #ACA899;border-left:1px solid #ACA899;border-right:1px solid #fff;border-bottom:1px solid #fff;box-shadow:inset 1px 1px 0 #716F64,inset -1px -1px 0 #ECE9D8"></div>
<div style="position:absolute;left:956px;top:238px;white-space:nowrap;font-size:12px;color:#FF00FF;letter-spacing:-0.3px">Overlay 4</div>
<div style="position:absolute;left:923px;top:253px;width:14px;height:14px;background:#ECE9D8;box-shadow:inset 1px 1px 0 #fff,inset -1px -1px 0 #716F64,inset -2px -2px 0 #ACA899"><div style="position:absolute;left:0;top:0px;width:13px;text-align:center;font-size:12px">5</div></div>
<div style="position:absolute;left:940px;top:254px;width:13px;height:13px;box-sizing:border-box;background:#fff;border-top:1px solid #ACA899;border-left:1px solid #ACA899;border-right:1px solid #fff;border-bottom:1px solid #fff;box-shadow:inset 1px 1px 0 #716F64,inset -1px -1px 0 #ECE9D8"></div>
<div style="position:absolute;left:956px;top:254px;white-space:nowrap;font-size:12px;color:#804000;letter-spacing:-0.3px">Overlay 5</div>
<div style="position:absolute;left:923px;top:269px;width:14px;height:14px;background:#ECE9D8;box-shadow:inset 1px 1px 0 #fff,inset -1px -1px 0 #716F64,inset -2px -2px 0 #ACA899"><div style="position:absolute;left:0;top:0px;width:13px;text-align:center;font-size:12px">6</div></div>
<div style="position:absolute;left:940px;top:270px;width:13px;height:13px;box-sizing:border-box;background:#fff;border-top:1px solid #ACA899;border-left:1px solid #ACA899;border-right:1px solid #fff;border-bottom:1px solid #fff;box-shadow:inset 1px 1px 0 #716F64,inset -1px -1px 0 #ECE9D8"></div>
<div style="position:absolute;left:956px;top:270px;white-space:nowrap;font-size:12px;color:#FF0000;letter-spacing:-0.3px">Overlay 6</div>
<div style="position:absolute;left:923px;top:285px;width:14px;height:14px;background:#ECE9D8;box-shadow:inset 1px 1px 0 #fff,inset -1px -1px 0 #716F64,inset -2px -2px 0 #ACA899"><div style="position:absolute;left:0;top:0px;width:13px;text-align:center;font-size:12px">C</div></div>
<div style="position:absolute;left:940px;top:286px;width:13px;height:13px;box-sizing:border-box;background:#fff;border-top:1px solid #ACA899;border-left:1px solid #ACA899;border-right:1px solid #fff;border-bottom:1px solid #fff;box-shadow:inset 1px 1px 0 #716F64,inset -1px -1px 0 #ECE9D8"></div>
<div style="position:absolute;left:956px;top:286px;white-space:nowrap;font-size:12px;color:#000;letter-spacing:-0.3px">Composite</div>
<div style="position:absolute;left:920px;top:302px;width:64px;height:18px;background:#ECE9D8;box-shadow:inset 1px 1px 0 #fff,inset -1px -1px 0 #716F64,inset -2px -2px 0 #ACA899"><div style="position:absolute;left:6px;top:2px;font-size:12px">Options...</div></div>
<div style="position:absolute;left:1021px;top:149px;width:1px;height:560px;background:#fff"></div>
<div style="position:absolute;left:1022px;top:46px;width:1px;height:691px;background:#F0EEE4"></div>
<div style="position:absolute;left:1023px;top:46px;width:1px;height:691px;background:#FAFAF4"></div>
<div style="position:absolute;left:2px;top:709px;width:1020px;height:1px;background:#fff"></div>
<div style="position:absolute;left:5px;top:713px;width:116px;height:16px;border-top:1px solid #ACA899;border-left:1px solid #ACA899;border-right:1px solid #fff;border-bottom:1px solid #E4E2DA"><div style="position:absolute;left:3px;top:1px;font-size:12px">Stopped</div></div>
<div style="position:absolute;left:125px;top:713px;width:99px;height:16px;border-top:1px solid #ACA899;border-left:1px solid #ACA899;border-right:1px solid #fff;border-bottom:1px solid #E4E2DA"><div style="position:absolute;left:3px;top:1px;font-size:12px">Real Time</div></div>
<div style="position:absolute;left:228px;top:713px;width:70px;height:16px;border-top:1px solid #ACA899;border-left:1px solid #ACA899;border-right:1px solid #fff;border-bottom:1px solid #E4E2DA"><div style="position:absolute;left:3px;top:1px;font-size:12px">96000 Hz</div></div>
<div style="position:absolute;left:302px;top:713px;width:48px;height:16px;border-top:1px solid #ACA899;border-left:1px solid #ACA899;border-right:1px solid #fff;border-bottom:1px solid #E4E2DA"><div style="position:absolute;left:3px;top:1px;font-size:12px">24 Bit</div></div>
<div style="position:absolute;left:355px;top:713px;width:48px;height:16px;border-top:1px solid #ACA899;border-left:1px solid #ACA899;border-right:1px solid #fff;border-bottom:1px solid #E4E2DA"><div style="position:absolute;left:3px;top:1px;font-size:12px">Stereo</div></div>
<div style="position:absolute;left:408px;top:713px;width:98px;height:16px;border-top:1px solid #ACA899;border-left:1px solid #ACA899;border-right:1px solid #fff;border-bottom:1px solid #E4E2DA"><div style="position:absolute;left:3px;top:1px;font-size:12px">FFT 524288 pts</div></div>
<div style="position:absolute;left:511px;top:713px;width:70px;height:16px;border-top:1px solid #ACA899;border-left:1px solid #ACA899;border-right:1px solid #fff;border-bottom:1px solid #E4E2DA"><div style="position:absolute;left:3px;top:1px;font-size:12px">Hanning</div></div>
<div style="position:absolute;left:585px;top:713px;width:433px;height:16px;border-top:1px solid #ACA899;border-left:1px solid #ACA899;border-right:1px solid #fff;border-bottom:1px solid #E4E2DA"><div style="position:absolute;left:3px;top:1px;font-size:12px"></div></div>
<div style="position:absolute;left:0px;top:737px;width:1024px;height:1px;background:#fff"></div>
<div style="position:absolute;left:0px;top:738px;width:1024px;height:30px;background:linear-gradient(#2A5DD0 0px,#2A5DD0 1px,#4A90E2 1.5px,#4890E4 3px,#2B6BE0 5px,#2157D7 8px,#2360DF 20px,#2664E2 27px,#1E4CB8 29px,#1A44A8 30px)"></div>
<div style="position:absolute;left:0;top:738px;width:96px;height:30px;border-radius:0 10px 0 0/0 14px 0 0;background:linear-gradient(#3C9A3C 0px,#64BB5F 3px,#3DA33A 8px,#37A136 20px,#2E8D2E 28px,#267A26 32px);box-shadow:inset -2px 0 3px #1E5E1E"></div>
<svg style="left:10px;top:743px" width="22" height="20"><g transform="skewX(-12) translate(3 0)"><path d="M3 3q3.5-2 8 0v6.5q-4-2-8 0z" fill="#F0541E"/><path d="M12 2q4 2 8 0v7.5q-4 2-8 0z" fill="#76B82A"/><path d="M2 10.5q4-2 8 0v7q-4-2-8 0z" fill="#3A7BE0"/><path d="M11 10.5q4 2 8 0v7.5q-4 2-8 0z" fill="#F8C800"/></g></svg>
<div style="position:absolute;left:35px;top:742px;white-space:nowrap;font-size:19px;color:#fff;text-shadow:1px 1px 1px #1a4a1a;transform:scaleX(0.88);transform-origin:0 0"><i><b>пуск</b></i></div>
<div style="position:absolute;left:105px;top:741px;width:160px;height:24px;border-radius:3px;background:linear-gradient(#1E4FBF,#1C48B4);border:1px solid #163E9E;box-sizing:border-box"></div>
<svg style="left:113px;top:745px" width="16" height="16"><rect x="0.5" y="0.5" width="15" height="15" fill="#fff" stroke="#222"/><path d="M1 5 L4 3 L6 6 L9 4 L12 8 L15 12" stroke="#00f" stroke-width="1.5" fill="none"/><path d="M1 4 L4 5 L7 3 L10 6 L15 9" stroke="#e00" stroke-width="1" fill="none"/><text x="3" y="15" font-family="Liberation Serif" font-style="italic" font-weight="bold" font-size="8" fill="#000">SC</text></svg>
<div style="position:absolute;left:134px;top:747px;white-space:nowrap;font-size:11px;color:#fff;letter-spacing:-0.3px">SpectraPLUS-SC Sou...</div>
<div style="position:absolute;left:266px;top:741px;width:158px;height:24px;border-radius:3px;background:linear-gradient(#4B8BF0 0px,#3D7CEB 3px,#3A77E8 20px,#3370E0 24px);border:1px solid #2A5CCB;box-sizing:border-box"></div>
<svg style="left:274px;top:745px" width="16" height="18"><path d="M5 2l2 10" stroke="#E07030" stroke-width="1.6"/><circle cx="4.8" cy="1.8" r="1.4" fill="#E06020"/><path d="M8 3v9" stroke="#F0C020" stroke-width="1.6"/><path d="M11.5 3l-2.5 9" stroke="#E03020" stroke-width="1.6"/><path d="M6.5 8l1.5 4" stroke="#40B040" stroke-width="1.4"/><path d="M3.5 6.5l1.5 9h6l1.5-9" fill="#B8C8E8" fill-opacity="0.45" stroke="#D0D8F0" stroke-width="1"/><path d="M4 14h8" stroke="#E0E8F8"/></svg>
<div style="position:absolute;left:295px;top:747px;white-space:nowrap;font-size:11px;color:#fff;letter-spacing:-0.3px">Yes-6 -19+20кГц.PN...</div>
<div style="position:absolute;left:895px;top:738px;width:129px;height:30px;background:linear-gradient(#1A9FE8 0px,#17A0EC 3px,#0C8EE0 12px,#0F89DC 28px,#1476C8 32px);border-left:1px solid #0A4CC0;box-shadow:inset 1px 0 0 #46B8F2"></div>
<div style="position:absolute;left:838px;top:745px;width:16px;height:16px;background:#3D77E0"></div>
<div style="position:absolute;left:839px;top:747px;white-space:nowrap;font-size:11px;color:#fff">RU</div>
<svg style="left:860px;top:746px" width="17" height="15"><path d="M8 3c1-2 3 0 4-2" stroke="#000" fill="none"/><rect x="0.5" y="4.5" width="16" height="9" rx="2" fill="#fff" stroke="#000"/><path d="M3 7.5h11M3 9.5h11M3 11.5h11" stroke="#555" stroke-dasharray="1 1"/></svg>
<svg style="left:906px;top:744px" width="20" height="18"><rect x="5" y="1" width="9" height="8" fill="#6A86C8" stroke="#2A3A6A"/><rect x="1" y="5" width="9" height="8" fill="#8AA2D8" stroke="#2A3A6A"/><rect x="3" y="13" width="6" height="3" fill="#C8C8D8"/><path d="M10 10l7 7M17 10l-7 7" stroke="#E02020" stroke-width="2.2"/></svg>
<svg style="left:925px;top:744px" width="18" height="18"><ellipse cx="8" cy="8" rx="7" ry="7" fill="#9CA0A8" stroke="#505560"/><ellipse cx="8" cy="8" rx="4" ry="4" fill="#606570"/><ellipse cx="7" cy="7" rx="1.5" ry="1.5" fill="#D0D4DC"/><path d="M9 16q5-1 7-5" stroke="#A0B8F0" fill="none"/></svg>
<svg style="left:942px;top:744px" width="18" height="18"><path d="M4 12l6-4 5 4-6 4z" fill="#A8B0A0" stroke="#404040"/><path d="M6 9.5l2-1.5 3 2.5-2 1.5z" fill="#fff" opacity="0.7"/><path d="M2 4l4 0v-3l4 4.5-4 4.5v-3H3z" fill="#50D040" stroke="#207020" stroke-width="0.8" transform="rotate(30 6 5)"/></svg>
<svg style="left:960px;top:744px" width="18" height="18"><circle cx="8" cy="8" r="7.5" fill="#2E9A4A"/><path d="M4 11h2M6 9h2v2M9 7h2v4M12 5h2v6" stroke="#fff" stroke-width="1.2"/><circle cx="13" cy="13" r="4" fill="#7A2A9A" stroke="#fff"/><circle cx="13" cy="13" r="1.2" fill="#fff"/></svg>
<div style="position:absolute;left:984px;top:747px;white-space:nowrap;font-size:11.5px;color:#fff;letter-spacing:-0.4px">16:04</div>
</body></html>
